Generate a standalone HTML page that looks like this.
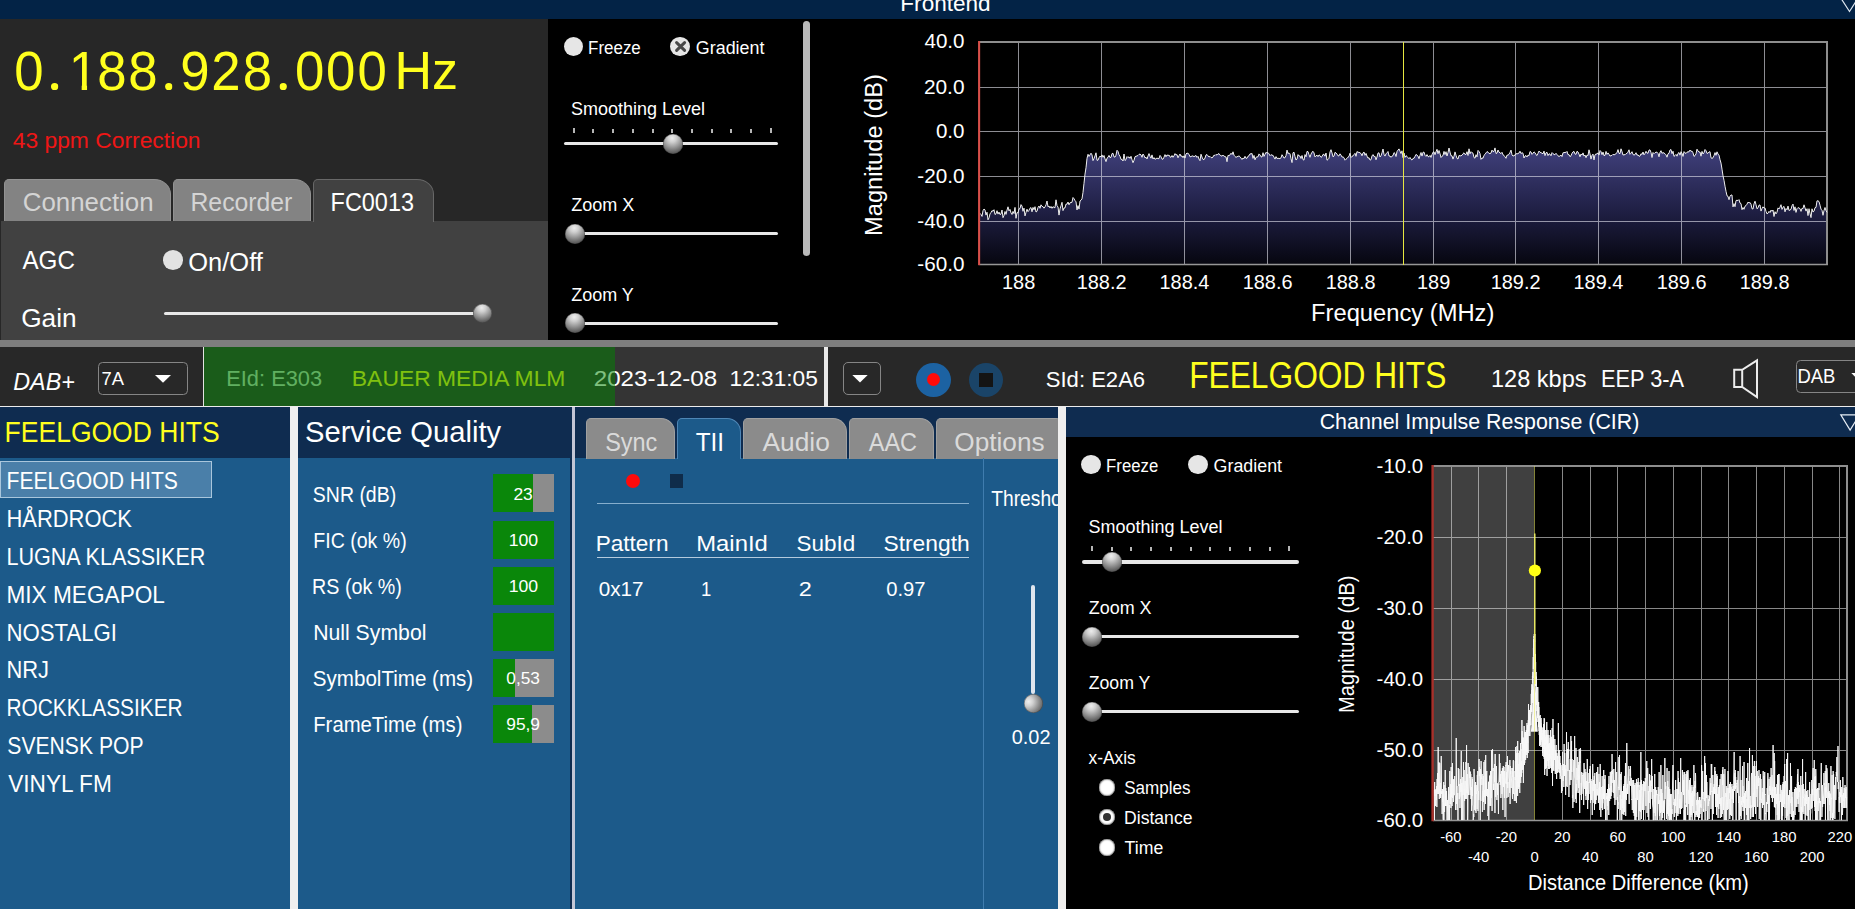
<!DOCTYPE html>
<html lang="en"><head><meta charset="utf-8"><title>DAB+ receiver</title>
<style>
html,body{margin:0;padding:0;background:#000}
body{width:1855px;height:909px;position:relative;overflow:hidden;font-family:"Liberation Sans",sans-serif}
#root{position:absolute;left:0;top:0;width:1855px;height:909px;overflow:hidden;background:#000}
#root div,#root svg,#root span.t{position:absolute}
#root svg{overflow:hidden}
.t{white-space:nowrap;line-height:1;transform-origin:0 0;display:block}
.c{border-radius:50%}
.thumb.v{background:radial-gradient(circle at 24% 40%,#efefef 0%,#d2d2d2 24%,#9a9a9a 52%,#6a6a6a 76%,#484848 100%)}
.thumb{border-radius:50%;background:radial-gradient(circle at 46% 20%,#ededed 0%,#cfcfcf 22%,#959595 50%,#606060 75%,#3a3a3a 100%);box-shadow:inset 0 0 0 0.6px rgba(50,50,50,.55)}
</style></head>
<body><div id="root">
<div style="left:0px;top:0px;width:1855px;height:19px;background:#032346;"></div>
<span class="t" style="left:900px;top:-8px;font-size:22.89px;color:#fff;transform:translateX(0.34px) scaleX(0.9863);">Frontend</span>
<svg style="left:1835px;top:0;width:20px;height:19px" viewBox="0 0 20 19"><path d="M4.5 -4 L14.5 11.5 L24.5 -4" fill="none" stroke="#dfe8f2" stroke-width="1.2"/></svg>
<div style="left:0px;top:19px;width:548px;height:202px;background:#272727;"></div>
<div style="left:0px;top:221px;width:548px;height:119px;background:#272727;"></div>
<div style="left:1px;top:221px;width:547px;height:119px;background:#414141;"></div>
<div style="left:0;top:0;width:0;height:0"><span class="t" style="left:14px;top:43px;font-size:55.8px;color:#ffff1e;transform:translateX(0.32px) scaleX(0.945)">0</span><span class="t" style="left:43.97px;top:25px;font-size:77.0px;color:#ffff1e;clip-path:circle(3.7px at 10.68px 61.60px)">.</span><span class="t" style="left:68px;top:43px;font-size:55.8px;color:#ffff1e;transform:translateX(0.82px) scaleX(0.945);clip-path:polygon(0.00px 0.00px,19.31px 0.00px,19.31px 48.00px,13.62px 48.00px,13.62px 41.20px,0.00px 41.20px)">1</span><span class="t" style="left:97px;top:43px;font-size:55.8px;color:#ffff1e;transform:translateX(0.16px) scaleX(0.945)">8</span><span class="t" style="left:128px;top:43px;font-size:55.8px;color:#ffff1e;transform:translateX(0.36px) scaleX(0.945)">8</span><span class="t" style="left:158.12px;top:25px;font-size:77.0px;color:#ffff1e;clip-path:circle(3.7px at 10.68px 61.60px)">.</span><span class="t" style="left:180px;top:43px;font-size:55.8px;color:#ffff1e;transform:translateX(0.33px) scaleX(0.945)">9</span><span class="t" style="left:211px;top:43px;font-size:55.8px;color:#ffff1e;transform:translateX(0.36px) scaleX(0.945)">2</span><span class="t" style="left:242px;top:43px;font-size:55.8px;color:#ffff1e;transform:translateX(0.66px) scaleX(0.945)">8</span><span class="t" style="left:272.57px;top:25px;font-size:77.0px;color:#ffff1e;clip-path:circle(3.7px at 10.68px 61.60px)">.</span><span class="t" style="left:295px;top:43px;font-size:55.8px;color:#ffff1e;transform:translateX(0.02px) scaleX(0.945)">0</span><span class="t" style="left:326px;top:43px;font-size:55.8px;color:#ffff1e;transform:translateX(0.02px) scaleX(0.945)">0</span><span class="t" style="left:357px;top:43px;font-size:55.8px;color:#ffff1e;transform:translateX(0.42px) scaleX(0.945)">0</span></div>
<span class="t" style="left:394px;top:44px;font-size:53.78px;color:#ffff1e;transform:translateX(0.51px) scaleX(0.9673);">Hz</span>
<span class="t" style="left:12px;top:130px;font-size:22.38px;color:#ee1616;transform:translateX(0.69px) scaleX(1.0208);">43 ppm Correction</span>
<div style="left:4px;top:178.7px;width:167.4px;height:42.30000000000001px;background:#838383;border-radius:5px 17px 0 0 / 5px 15px 0 0;box-sizing:border-box;border:1px solid #929292;border-bottom:none;"></div>
<div style="left:172.9px;top:178.7px;width:138.1px;height:42.30000000000001px;background:#838383;border-radius:5px 17px 0 0 / 5px 15px 0 0;box-sizing:border-box;border:1px solid #929292;border-bottom:none;"></div>
<div style="left:312.5px;top:178.7px;width:121.5px;height:43.30000000000001px;background:#414141;border-radius:5px 17px 0 0 / 5px 15px 0 0;box-sizing:border-box;border:1px solid #686868;border-bottom:none;"></div>
<span class="t" style="left:22px;top:189px;font-size:26.16px;color:#d4d4d4;transform:translateX(0.71px) scaleX(0.9894);">Connection</span>
<span class="t" style="left:190px;top:189px;font-size:26.16px;color:#d4d4d4;transform:translateX(0.46px) scaleX(0.9472);">Recorder</span>
<span class="t" style="left:330px;top:189px;font-size:26.16px;color:#fff;transform:translateX(0.57px) scaleX(0.8964);">FC0013</span>
<span class="t" style="left:22px;top:247px;font-size:26.45px;color:#fff;transform:translateX(0.44px) scaleX(0.9151);">AGC</span>
<div class="c" style="left:163px;top:250px;width:20px;height:19.5px;background:#e2e2e2"></div>
<span class="t" style="left:188px;top:250px;font-size:25.87px;color:#fff;transform:translateX(0.29px) scaleX(0.9856);">On/Off</span>
<span class="t" style="left:21px;top:305px;font-size:26.45px;color:#fff;transform:translateX(0.19px) scaleX(0.9935);">Gain</span>
<div style="left:163.75px;top:312.1px;width:316.25px;height:3.3px;background:#e8e8e8;border-radius:2px"></div>
<div class="thumb" style="left:473.0px;top:304.25px;width:19px;height:19px"></div>
<div class="c" style="left:564.25px;top:36.5px;width:19px;height:19px;background:#e6e6e6"></div>
<span class="t" style="left:588px;top:39px;font-size:18.90px;color:#fff;transform:translateX(0.10px) scaleX(0.8953);">Freeze</span>
<div class="c" style="left:670.2px;top:36.5px;width:19.8px;height:19.3px;background:#e6e6e6"></div>
<svg style="left:670.5px;top:36.5px;width:19.5px;height:19px" viewBox="0 0 19.5 19"><path d="M5.6 5.6 L13.6 13.4 M13.6 5.6 L5.6 13.4" stroke="#484848" stroke-width="3" stroke-linecap="round" fill="none"/></svg>
<span class="t" style="left:695px;top:39px;font-size:18.90px;color:#fff;transform:translateX(0.86px) scaleX(0.9457);">Gradient</span>
<span class="t" style="left:570px;top:100px;font-size:18.90px;color:#fff;transform:translateX(0.94px) scaleX(0.9521);">Smoothing Level</span>
<div style="left:573px;top:127.50px;width:2px;height:5.5px;background:#b6b6b6"></div>
<div style="left:592px;top:128.80px;width:2px;height:4.2px;background:#b6b6b6"></div>
<div style="left:612px;top:128.80px;width:2px;height:4.2px;background:#b6b6b6"></div>
<div style="left:632px;top:128.80px;width:2px;height:4.2px;background:#b6b6b6"></div>
<div style="left:652px;top:128.80px;width:2px;height:4.2px;background:#b6b6b6"></div>
<div style="left:671px;top:128.80px;width:2px;height:4.2px;background:#b6b6b6"></div>
<div style="left:691px;top:128.80px;width:2px;height:4.2px;background:#b6b6b6"></div>
<div style="left:711px;top:128.80px;width:2px;height:4.2px;background:#b6b6b6"></div>
<div style="left:730px;top:128.80px;width:2px;height:4.2px;background:#b6b6b6"></div>
<div style="left:750px;top:128.80px;width:2px;height:4.2px;background:#b6b6b6"></div>
<div style="left:770px;top:127.50px;width:2px;height:5.5px;background:#b6b6b6"></div>
<div style="left:564.25px;top:142.1px;width:213.25px;height:3.3px;background:#e8e8e8;border-radius:2px"></div>
<div class="thumb" style="left:662.75px;top:133.75px;width:20px;height:20px"></div>
<span class="t" style="left:571px;top:196px;font-size:18.53px;color:#fff;transform:translateX(0.21px) scaleX(0.9736);">Zoom X</span>
<div style="left:567.25px;top:231.85px;width:210.75px;height:3.3px;background:#e8e8e8;border-radius:2px"></div>
<div class="thumb" style="left:564.75px;top:223.5px;width:20px;height:20px"></div>
<span class="t" style="left:571px;top:286px;font-size:18.53px;color:#fff;transform:translateX(0.21px) scaleX(0.9715);">Zoom Y</span>
<div style="left:567.25px;top:321.6px;width:210.75px;height:3.3px;background:#e8e8e8;border-radius:2px"></div>
<div class="thumb" style="left:564.75px;top:313.25px;width:20px;height:20px"></div>
<div style="left:802.5px;top:21px;width:7px;height:235px;background:#b9b9b9;border-radius:3.5px;"></div>
<div style="left:0px;top:340px;width:1855px;height:7px;background:#7e7e7e;"></div>
<div style="left:0px;top:347px;width:1855px;height:59px;background:#282828;"></div>
<div style="left:203px;top:347px;width:621px;height:59px;background:#343434;"></div>
<div style="left:824px;top:347px;width:4px;height:59px;background:#e9e9e9;"></div>
<div style="left:0px;top:405.9px;width:1855px;height:1.3px;background:#ececec;"></div>
<span class="t" style="left:13px;top:370px;font-size:24.71px;color:#fff;transform:translateX(0.30px) scaleX(0.9430);font-style:italic;">DAB+</span>
<div style="left:98px;top:361.9px;width:90px;height:32.8px;border:1.3px solid #858585;border-radius:4.5px;box-sizing:border-box;background:#282828"></div>
<span class="t" style="left:101px;top:369px;font-size:19.19px;color:#fff;transform:translateX(0.58px) scaleX(0.9578);">7A</span>
<svg style="left:155px;top:374px;width:17px;height:10px" viewBox="0 0 17 10"><path d="M0 1 L16 1 L8 8.8 Z" fill="#fff"/></svg>
<span class="t" style="left:226px;top:367px;font-size:22.67px;color:#c0dcc0;transform:translateX(0.20px) scaleX(0.9643);">EId: E303</span>
<span class="t" style="left:351px;top:367px;font-size:22.67px;color:#ffff1e;transform:translateX(0.86px) scaleX(1.0097);">BAUER MEDIA MLM</span>
<span class="t" style="left:593px;top:367px;font-size:22.67px;color:#fff;transform:translateX(0.79px) scaleX(1.0647);">2023-12-08</span>
<span class="t" style="left:729px;top:367px;font-size:22.67px;color:#fff;transform:translateX(0.55px) scaleX(1.0011);">12:31:05</span>
<div style="left:203px;top:347px;width:411.8px;height:59px;background:rgba(0,132,0,0.5);border-left:1.1px solid #e2e2e2;box-sizing:border-box;"></div>
<div style="left:843px;top:362px;width:37.8px;height:33px;border:1.3px solid #858585;border-radius:5px;box-sizing:border-box;background:#282828"></div>
<svg style="left:852.2px;top:373.5px;width:17px;height:10px" viewBox="0 0 17 10"><path d="M0.3 1 L15.7 1 L8 8.6 Z" fill="#fff"/></svg>
<div class="c" style="left:916.25px;top:363px;width:34.5px;height:34px;background:#1c62a2"></div>
<div class="c" style="left:926.8px;top:372.9px;width:13.6px;height:13.6px;background:#ff0a0a"></div>
<div class="c" style="left:969.25px;top:363px;width:34px;height:34px;background:#1a4468"></div>
<div style="left:979.25px;top:372.5px;width:14px;height:14.25px;background:#141414;"></div>
<span class="t" style="left:1045px;top:368px;font-size:22.67px;color:#fff;transform:translateX(0.76px) scaleX(0.9740);">SId: E2A6</span>
<span class="t" style="left:1189px;top:357px;font-size:37.21px;color:#ffff1e;transform:translateX(0.18px) scaleX(0.8522);">FEELGOOD HITS</span>
<span class="t" style="left:1490px;top:368px;font-size:23.26px;color:#fff;transform:translateX(0.98px) scaleX(1.0130);">128 kbps</span>
<span class="t" style="left:1600px;top:368px;font-size:23.26px;color:#fff;transform:translateX(0.95px) scaleX(0.9360);">EEP 3-A</span>
<svg style="left:1730px;top:356px;width:32px;height:46px" viewBox="0 0 32 46"><path d="M4.2 13.8 L12.2 13.8 L27.0 4.4 L27.0 41.0 L12.2 31 L4.2 31 Z M12.2 13.8 L12.2 31" fill="none" stroke="#ececec" stroke-width="2" stroke-linejoin="miter"/></svg>
<div style="left:1796px;top:360px;width:80px;height:33.2px;border:1.3px solid #858585;border-radius:4.5px;box-sizing:border-box;background:#282828"></div>
<span class="t" style="left:1797px;top:367px;font-size:19.62px;color:#fff;transform:translateX(0.48px) scaleX(0.9411);">DAB</span>
<svg style="left:1851px;top:372px;width:17px;height:10px" viewBox="0 0 17 10"><path d="M0.3 1 L15.7 1 L8 8.6 Z" fill="#fff"/></svg>
<div style="left:0px;top:407px;width:290px;height:51px;background:#0f2c50;"></div>
<div style="left:0px;top:458px;width:290px;height:451px;background:#1c5a8a;"></div>
<span class="t" style="left:4px;top:418px;font-size:28.92px;color:#ffff1e;transform:translateX(0.56px) scaleX(0.9173);">FEELGOOD HITS</span>
<div style="left:0;top:460.5px;width:212px;height:37.5px;background:#4a7fa9;border:1.5px solid #a9c6dc;box-sizing:border-box"></div>
<span class="t" style="left:6px;top:470px;font-size:23.40px;color:#fff;transform:translateX(0.51px) scaleX(0.9031);">FEELGOOD HITS</span>
<span class="t" style="left:6px;top:508px;font-size:23.40px;color:#fff;transform:translateX(0.44px) scaleX(0.9378);">HÅRDROCK</span>
<span class="t" style="left:6px;top:546px;font-size:23.40px;color:#fff;transform:translateX(0.47px) scaleX(0.9218);">LUGNA KLASSIKER</span>
<span class="t" style="left:6px;top:584px;font-size:23.40px;color:#fff;transform:translateX(0.38px) scaleX(0.9682);">MIX MEGAPOL</span>
<span class="t" style="left:6px;top:622px;font-size:23.40px;color:#fff;transform:translateX(0.42px) scaleX(0.9489);">NOSTALGI</span>
<span class="t" style="left:6px;top:659px;font-size:23.40px;color:#fff;transform:translateX(0.44px) scaleX(0.9370);">NRJ</span>
<span class="t" style="left:6px;top:697px;font-size:23.40px;color:#fff;transform:translateX(0.53px) scaleX(0.8914);">ROCKKLASSIKER</span>
<span class="t" style="left:7px;top:735px;font-size:23.40px;color:#fff;transform:translateX(0.30px) scaleX(0.9034);">SVENSK POP</span>
<span class="t" style="left:8px;top:773px;font-size:23.40px;color:#fff;transform:translateX(0.14px) scaleX(0.9684);">VINYL FM</span>
<div style="left:290px;top:407px;width:8px;height:502px;background:#efefef;"></div>
<div style="left:298px;top:407px;width:272px;height:51px;background:#0f2c50;"></div>
<div style="left:298px;top:458px;width:272px;height:451px;background:#1c5a8a;"></div>
<span class="t" style="left:304px;top:418px;font-size:28.92px;color:#fff;transform:translateX(0.94px) scaleX(1.0096);">Service Quality</span>
<span class="t" style="left:312px;top:484px;font-size:21.80px;color:#fff;transform:translateX(0.87px) scaleX(0.8931);">SNR (dB)</span>
<div style="left:493.25px;top:474.25px;width:60.25px;height:37.75px;background:#8c8c8c;"></div>
<div style="left:493.25px;top:474.25px;width:39.25px;height:37.75px;background:#0a870a;"></div>
<span class="t" style="left:513px;top:486px;font-size:17.30px;color:#fff;transform:translateX(0.38px) scaleX(1.0086);">23</span>
<span class="t" style="left:313px;top:530px;font-size:21.80px;color:#fff;transform:translateX(0.29px) scaleX(0.8966);">FIC (ok %)</span>
<div style="left:493.25px;top:520.75px;width:60.25px;height:37.75px;background:#8c8c8c;"></div>
<div style="left:493.25px;top:520.75px;width:60.25px;height:37.75px;background:#0a870a;"></div>
<span class="t" style="left:508px;top:532px;font-size:17.30px;color:#fff;transform:translateX(0.67px) scaleX(1.0225);">100</span>
<span class="t" style="left:312px;top:576px;font-size:21.80px;color:#fff;transform:translateX(0.12px) scaleX(0.9043);">RS (ok %)</span>
<div style="left:493.25px;top:567px;width:60.25px;height:37.75px;background:#8c8c8c;"></div>
<div style="left:493.25px;top:567px;width:60.25px;height:37.75px;background:#0a870a;"></div>
<span class="t" style="left:508px;top:578px;font-size:17.30px;color:#fff;transform:translateX(0.67px) scaleX(1.0225);">100</span>
<span class="t" style="left:313px;top:622px;font-size:21.80px;color:#fff;transform:translateX(0.15px) scaleX(0.9739);">Null Symbol</span>
<div style="left:493.25px;top:613px;width:60.25px;height:37.75px;background:#8c8c8c;"></div>
<div style="left:493.25px;top:613px;width:60.25px;height:37.75px;background:#0a870a;"></div>
<span class="t" style="left:312px;top:668px;font-size:21.80px;color:#fff;transform:translateX(0.82px) scaleX(0.9439);">SymbolTime (ms)</span>
<div style="left:493.25px;top:659px;width:60.25px;height:37.75px;background:#8c8c8c;"></div>
<div style="left:493.25px;top:659px;width:21.25px;height:37.75px;background:#0a870a;"></div>
<span class="t" style="left:506px;top:670px;font-size:17.30px;color:#fff;transform:translateX(0.35px) scaleX(0.9998);">0,53</span>
<span class="t" style="left:313px;top:714px;font-size:21.80px;color:#fff;transform:translateX(0.22px) scaleX(0.9313);">FrameTime (ms)</span>
<div style="left:493.25px;top:705px;width:60.25px;height:37.75px;background:#8c8c8c;"></div>
<div style="left:493.25px;top:705px;width:38.25px;height:37.75px;background:#0a870a;"></div>
<span class="t" style="left:506px;top:716px;font-size:17.30px;color:#fff;transform:translateX(0.22px) scaleX(1.0051);">95,9</span>
<div style="left:570px;top:407px;width:1.5px;height:502px;background:#0f2c50;"></div>
<div style="left:571.5px;top:407px;width:3.5px;height:502px;background:#c3c6d6;"></div>
<div style="left:575px;top:407px;width:483px;height:51px;background:#0f2c50;"></div>
<div style="left:575px;top:458px;width:483px;height:451px;background:#1c5a8a;"></div>
<div style="left:575px;top:407px;width:483px;height:502px;overflow:hidden;background:none"><div style="position:absolute;left:-575px;top:-407px">
<div style="left:586.25px;top:418px;width:88.75px;height:40.5px;background:#8b8b8b;border-radius:5px 14px 0 0;box-sizing:border-box;border:1px solid #a0a0a0;border-bottom:none"></div>
<span class="t" style="left:605px;top:429px;font-size:26.16px;color:#dadada;transform:translateX(0.19px) scaleX(0.8967);">Sync</span>
<div style="left:677px;top:418px;width:64.25px;height:41px;background:#1c5a8a;border-radius:5px 14px 0 0;box-sizing:border-box;border:1px solid #4e86b6;border-bottom:none"></div>
<span class="t" style="left:695px;top:429px;font-size:26.16px;color:#fff;transform:translateX(0.70px) scaleX(0.9283);">TII</span>
<div style="left:742.5px;top:418px;width:104.5px;height:40.5px;background:#8b8b8b;border-radius:5px 14px 0 0;box-sizing:border-box;border:1px solid #a0a0a0;border-bottom:none"></div>
<span class="t" style="left:762px;top:429px;font-size:26.16px;color:#dadada;transform:translateX(0.43px) scaleX(1.0068);">Audio</span>
<div style="left:848.75px;top:418px;width:85.0px;height:40.5px;background:#8b8b8b;border-radius:5px 14px 0 0;box-sizing:border-box;border:1px solid #a0a0a0;border-bottom:none"></div>
<span class="t" style="left:868px;top:429px;font-size:26.16px;color:#dadada;transform:translateX(0.69px) scaleX(0.8999);">AAC</span>
<div style="left:935.5px;top:418px;width:134.5px;height:40.5px;background:#8b8b8b;border-radius:5px 14px 0 0;box-sizing:border-box;border:1px solid #a0a0a0;border-bottom:none"></div>
<span class="t" style="left:954px;top:429px;font-size:26.16px;color:#dadada;transform:translateX(0.25px) scaleX(1.0024);">Options</span>
<span class="t" style="left:991px;top:488px;font-size:21.80px;color:#fff;transform:translateX(0.32px) scaleX(0.8810);">Threshold</span>
</div></div>
<div class="c" style="left:626.25px;top:474px;width:14px;height:14px;background:#ff0a0a"></div>
<div style="left:670px;top:474px;width:13.25px;height:13.8px;background:#0f2c4a;"></div>
<div style="left:597px;top:503px;width:371.5px;height:1px;background:#86aecd;"></div>
<span class="t" style="left:595px;top:533px;font-size:21.80px;color:#fff;transform:translateX(0.64px) scaleX(1.0358);">Pattern</span>
<span class="t" style="left:696px;top:533px;font-size:21.80px;color:#fff;transform:translateX(0.29px) scaleX(1.0924);">MainId</span>
<span class="t" style="left:796px;top:533px;font-size:21.80px;color:#fff;transform:translateX(0.49px) scaleX(1.0299);">SubId</span>
<span class="t" style="left:883px;top:533px;font-size:21.80px;color:#fff;transform:translateX(0.47px) scaleX(1.0460);">Strength</span>
<div style="left:597px;top:557px;width:371.5px;height:1.2px;background:#b4cadd;"></div>
<span class="t" style="left:598px;top:578px;font-size:21.08px;color:#fff;transform:translateX(0.73px) scaleX(0.9797);">0x17</span>
<span class="t" style="left:701px;top:578px;font-size:21.08px;color:#fff;transform:translateX(0.11px) scaleX(0.8777);">1</span>
<span class="t" style="left:798px;top:578px;font-size:21.08px;color:#fff;transform:translateX(0.83px) scaleX(1.1149);">2</span>
<span class="t" style="left:886px;top:578px;font-size:21.08px;color:#fff;transform:translateX(0.24px) scaleX(0.9566);">0.97</span>
<div style="left:983.25px;top:458px;width:1px;height:451px;background:#3f7cae;"></div>
<div style="left:1031.25px;top:585px;width:3.75px;height:109px;background:#dfe6ef;border-radius:2px;"></div>
<div class="thumb v" style="left:1023.75px;top:694.25px;width:19.25px;height:19px"></div>
<span class="t" style="left:1011px;top:727px;font-size:20.35px;color:#fff;transform:translateX(0.75px) scaleX(0.9776);">0.02</span>
<div style="left:1058px;top:407px;width:8px;height:502px;background:#f0efee;"></div>
<div style="left:1066px;top:407px;width:789px;height:29.8px;background:#0f2c50;"></div>
<span class="t" style="left:1319px;top:410px;font-size:22.89px;color:#fff;transform:translateX(0.68px) scaleX(0.9346);">Channel Impulse Response (CIR)</span>
<svg style="left:1835px;top:410px;width:20px;height:24px" viewBox="0 0 20 24"><path d="M5.8 4.8 L24.5 4.8 L15.1 20 Z" fill="none" stroke="#e8eef5" stroke-width="1.2"/></svg>
<div class="c" style="left:1081.25px;top:454.8px;width:19.5px;height:19px;background:#e6e6e6"></div>
<span class="t" style="left:1106px;top:457px;font-size:18.53px;color:#fff;transform:translateX(0.12px) scaleX(0.9039);">Freeze</span>
<div class="c" style="left:1188px;top:454.8px;width:19.5px;height:19px;background:#e6e6e6"></div>
<span class="t" style="left:1213px;top:457px;font-size:18.53px;color:#fff;transform:translateX(0.61px) scaleX(0.9642);">Gradient</span>
<span class="t" style="left:1088px;top:518px;font-size:18.90px;color:#fff;transform:translateX(0.44px) scaleX(0.9521);">Smoothing Level</span>
<div style="left:1091px;top:545.75px;width:2px;height:5.5px;background:#b6b6b6"></div>
<div style="left:1111px;top:547.05px;width:2px;height:4.2px;background:#b6b6b6"></div>
<div style="left:1130px;top:547.05px;width:2px;height:4.2px;background:#b6b6b6"></div>
<div style="left:1150px;top:547.05px;width:2px;height:4.2px;background:#b6b6b6"></div>
<div style="left:1170px;top:547.05px;width:2px;height:4.2px;background:#b6b6b6"></div>
<div style="left:1190px;top:547.05px;width:2px;height:4.2px;background:#b6b6b6"></div>
<div style="left:1209px;top:547.05px;width:2px;height:4.2px;background:#b6b6b6"></div>
<div style="left:1229px;top:547.05px;width:2px;height:4.2px;background:#b6b6b6"></div>
<div style="left:1249px;top:547.05px;width:2px;height:4.2px;background:#b6b6b6"></div>
<div style="left:1269px;top:547.05px;width:2px;height:4.2px;background:#b6b6b6"></div>
<div style="left:1288px;top:545.75px;width:2px;height:5.5px;background:#b6b6b6"></div>
<div style="left:1081.75px;top:560.35px;width:217.0px;height:3.3px;background:#e8e8e8;border-radius:2px"></div>
<div class="thumb" style="left:1101.8px;top:552.0px;width:20px;height:20px"></div>
<span class="t" style="left:1088px;top:599px;font-size:18.53px;color:#fff;transform:translateX(0.71px) scaleX(0.9697);">Zoom X</span>
<div style="left:1084.75px;top:635.1px;width:214.0px;height:3.3px;background:#e8e8e8;border-radius:2px"></div>
<div class="thumb" style="left:1081.75px;top:626.75px;width:20px;height:20px"></div>
<span class="t" style="left:1088px;top:674px;font-size:18.53px;color:#fff;transform:translateX(0.72px) scaleX(0.9557);">Zoom Y</span>
<div style="left:1084.75px;top:710.1px;width:214.0px;height:3.3px;background:#e8e8e8;border-radius:2px"></div>
<div class="thumb" style="left:1081.75px;top:701.75px;width:20px;height:20px"></div>
<span class="t" style="left:1088px;top:749px;font-size:18.53px;color:#fff;transform:translateX(0.53px) scaleX(0.9380);">x-Axis</span>
<div class="c" style="left:1098.6px;top:779.1px;width:16.8px;height:16.8px;background:#fff;box-shadow:inset 0 0 1.5px 0.5px #555"></div>
<div class="c" style="left:1098.6px;top:808.6px;width:16.8px;height:16.8px;background:#fff;box-shadow:inset 0 0 1.5px 0.5px #555"></div>
<div class="c" style="left:1102.9px;top:812.9px;width:8.2px;height:8.2px;background:#333"></div>
<div class="c" style="left:1098.6px;top:839.1px;width:16.8px;height:16.8px;background:#fff;box-shadow:inset 0 0 1.5px 0.5px #555"></div>
<span class="t" style="left:1124px;top:779px;font-size:18.53px;color:#fff;transform:translateX(0.23px) scaleX(0.9206);">Samples</span>
<span class="t" style="left:1124px;top:809px;font-size:18.53px;color:#fff;transform:translateX(0.05px) scaleX(0.9495);">Distance</span>
<span class="t" style="left:1124px;top:839px;font-size:18.53px;color:#fff;transform:translateX(0.60px) scaleX(0.9545);">Time</span>
<svg style="left:0;top:0;width:1855px;height:340px" viewBox="0 0 1855 340"><defs><linearGradient id="sg" gradientUnits="userSpaceOnUse" x1="0" y1="150" x2="0" y2="265"><stop offset="0" stop-color="#3f3f7a"/><stop offset="0.55" stop-color="#1e1e42"/><stop offset="1" stop-color="#06060f"/></linearGradient></defs><polygon points="979.5,264.75 980.0,213.3 981.0,214.5 982.0,216.4 983.0,210.7 984.0,209.0 985.0,209.9 986.0,215.1 987.0,212.2 988.0,219.8 989.0,217.9 990.0,213.9 991.0,212.5 992.0,210.6 993.0,211.3 994.0,209.7 995.0,214.5 996.0,213.8 997.0,210.7 998.0,214.1 999.0,212.1 1000.0,214.6 1001.0,214.0 1002.0,210.0 1003.0,217.7 1004.0,215.5 1005.0,211.5 1006.0,214.4 1007.0,210.1 1008.0,206.8 1009.0,210.9 1010.0,209.4 1011.0,212.9 1012.0,214.5 1013.0,211.4 1014.0,213.6 1015.0,207.4 1016.0,218.3 1017.0,212.6 1018.0,212.9 1019.0,208.9 1020.0,208.6 1021.0,204.6 1022.0,206.0 1023.0,211.3 1024.0,208.1 1025.0,215.9 1026.0,212.4 1027.0,209.2 1028.0,211.7 1029.0,210.3 1030.0,208.2 1031.0,207.6 1032.0,211.8 1033.0,207.4 1034.0,209.8 1035.0,206.7 1036.0,212.0 1037.0,211.3 1038.0,207.5 1039.0,206.0 1040.0,208.3 1041.0,204.8 1042.0,206.4 1043.0,206.6 1044.0,208.2 1045.0,206.9 1046.0,204.8 1047.0,201.0 1048.0,206.8 1049.0,206.0 1050.0,208.0 1051.0,206.4 1052.0,208.3 1053.0,206.6 1054.0,207.5 1055.0,207.7 1056.0,199.8 1057.0,205.7 1058.0,207.0 1059.0,215.1 1060.0,208.9 1061.0,205.8 1062.0,202.3 1063.0,210.6 1064.0,208.0 1065.0,207.9 1066.0,204.1 1067.0,204.2 1068.0,202.0 1069.0,204.8 1070.0,202.8 1071.0,202.5 1072.0,202.3 1073.0,197.5 1074.0,198.7 1075.0,200.6 1076.0,201.8 1077.0,209.9 1078.0,205.6 1079.0,209.1 1080.0,201.0 1081.0,200.2 1082.0,198.9 1083.0,192.4 1084.0,183.3 1085.0,174.1 1086.0,167.8 1087.0,158.4 1088.0,154.3 1089.0,156.5 1090.0,154.9 1091.0,153.2 1092.0,154.9 1093.0,160.6 1094.0,158.5 1095.0,155.9 1096.0,152.8 1097.0,160.3 1098.0,160.2 1099.0,157.7 1100.0,156.1 1101.0,157.0 1102.0,154.9 1103.0,157.3 1104.0,155.5 1105.0,158.9 1106.0,161.6 1107.0,158.2 1108.0,157.3 1109.0,155.4 1110.0,157.6 1111.0,157.3 1112.0,153.6 1113.0,153.3 1114.0,156.9 1115.0,157.1 1116.0,155.2 1117.0,150.3 1118.0,151.4 1119.0,154.8 1120.0,156.3 1121.0,159.4 1122.0,159.4 1123.0,161.0 1124.0,154.0 1125.0,160.5 1126.0,159.6 1127.0,156.6 1128.0,157.6 1129.0,156.8 1130.0,158.4 1131.0,156.3 1132.0,159.8 1133.0,162.7 1134.0,160.3 1135.0,156.7 1136.0,156.2 1137.0,156.0 1138.0,155.4 1139.0,154.4 1140.0,154.1 1141.0,154.9 1142.0,157.3 1143.0,154.0 1144.0,155.5 1145.0,157.9 1146.0,157.2 1147.0,159.0 1148.0,156.0 1149.0,153.6 1150.0,156.3 1151.0,158.2 1152.0,154.9 1153.0,159.0 1154.0,157.6 1155.0,159.3 1156.0,158.7 1157.0,158.0 1158.0,158.6 1159.0,158.6 1160.0,155.4 1161.0,156.7 1162.0,159.2 1163.0,159.2 1164.0,157.2 1165.0,154.6 1166.0,156.8 1167.0,154.9 1168.0,155.6 1169.0,155.0 1170.0,156.9 1171.0,157.3 1172.0,155.5 1173.0,157.3 1174.0,155.9 1175.0,153.6 1176.0,155.0 1177.0,154.6 1178.0,157.8 1179.0,155.8 1180.0,154.0 1181.0,156.4 1182.0,155.8 1183.0,157.7 1184.0,155.8 1185.0,158.1 1186.0,153.9 1187.0,153.1 1188.0,153.4 1189.0,154.3 1190.0,156.8 1191.0,156.6 1192.0,156.0 1193.0,155.9 1194.0,156.8 1195.0,156.0 1196.0,155.5 1197.0,157.4 1198.0,156.3 1199.0,159.1 1200.0,160.7 1201.0,154.2 1202.0,157.1 1203.0,159.4 1204.0,159.7 1205.0,158.0 1206.0,154.9 1207.0,154.6 1208.0,155.8 1209.0,157.0 1210.0,156.4 1211.0,157.5 1212.0,157.8 1213.0,157.0 1214.0,155.1 1215.0,155.5 1216.0,154.4 1217.0,155.1 1218.0,154.1 1219.0,153.6 1220.0,155.1 1221.0,156.1 1222.0,155.8 1223.0,155.4 1224.0,155.9 1225.0,156.8 1226.0,156.9 1227.0,161.7 1228.0,155.4 1229.0,155.7 1230.0,154.9 1231.0,153.2 1232.0,154.5 1233.0,151.8 1234.0,155.2 1235.0,156.5 1236.0,157.4 1237.0,156.7 1238.0,156.4 1239.0,155.9 1240.0,156.7 1241.0,158.1 1242.0,159.5 1243.0,158.0 1244.0,158.7 1245.0,156.3 1246.0,158.3 1247.0,158.2 1248.0,156.2 1249.0,155.8 1250.0,153.8 1251.0,154.0 1252.0,153.4 1253.0,158.4 1254.0,155.4 1255.0,159.8 1256.0,157.3 1257.0,156.9 1258.0,156.8 1259.0,153.9 1260.0,154.9 1261.0,156.8 1262.0,157.0 1263.0,152.7 1264.0,156.4 1265.0,154.3 1266.0,152.3 1267.0,153.1 1268.0,152.6 1269.0,153.9 1270.0,155.7 1271.0,154.6 1272.0,155.3 1273.0,155.3 1274.0,157.2 1275.0,159.1 1276.0,156.6 1277.0,158.6 1278.0,158.1 1279.0,158.6 1280.0,158.5 1281.0,157.9 1282.0,154.7 1283.0,156.2 1284.0,158.0 1285.0,157.7 1286.0,155.5 1287.0,150.1 1288.0,153.7 1289.0,152.8 1290.0,153.9 1291.0,158.7 1292.0,162.6 1293.0,152.8 1294.0,152.2 1295.0,156.6 1296.0,160.0 1297.0,159.1 1298.0,154.6 1299.0,156.0 1300.0,156.0 1301.0,158.5 1302.0,155.5 1303.0,159.6 1304.0,160.1 1305.0,154.6 1306.0,156.8 1307.0,151.4 1308.0,151.6 1309.0,154.7 1310.0,157.3 1311.0,154.2 1312.0,152.2 1313.0,151.3 1314.0,152.9 1315.0,156.9 1316.0,155.9 1317.0,155.1 1318.0,156.7 1319.0,154.9 1320.0,155.6 1321.0,157.3 1322.0,156.6 1323.0,154.4 1324.0,154.3 1325.0,156.2 1326.0,153.0 1327.0,160.2 1328.0,159.5 1329.0,158.2 1330.0,152.0 1331.0,149.7 1332.0,152.9 1333.0,156.8 1334.0,156.1 1335.0,152.3 1336.0,153.0 1337.0,154.1 1338.0,155.8 1339.0,155.9 1340.0,153.8 1341.0,155.1 1342.0,157.1 1343.0,156.9 1344.0,157.7 1345.0,160.2 1346.0,159.2 1347.0,158.4 1348.0,157.1 1349.0,156.4 1350.0,153.2 1351.0,157.5 1352.0,156.4 1353.0,155.9 1354.0,154.5 1355.0,153.3 1356.0,156.3 1357.0,151.5 1358.0,152.4 1359.0,152.2 1360.0,152.9 1361.0,153.5 1362.0,155.8 1363.0,152.9 1364.0,152.0 1365.0,155.3 1366.0,153.4 1367.0,156.1 1368.0,158.2 1369.0,157.7 1370.0,160.1 1371.0,159.7 1372.0,155.9 1373.0,154.6 1374.0,156.5 1375.0,156.3 1376.0,159.8 1377.0,157.0 1378.0,153.1 1379.0,152.8 1380.0,157.0 1381.0,155.8 1382.0,152.8 1383.0,149.0 1384.0,154.4 1385.0,156.1 1386.0,153.8 1387.0,152.8 1388.0,151.5 1389.0,156.0 1390.0,156.0 1391.0,157.3 1392.0,156.1 1393.0,155.6 1394.0,152.6 1395.0,153.5 1396.0,156.5 1397.0,151.5 1398.0,150.1 1399.0,148.9 1400.0,151.2 1401.0,153.5 1402.0,150.8 1403.0,157.6 1404.0,153.0 1405.0,157.4 1406.0,155.7 1407.0,156.4 1408.0,157.7 1409.0,158.8 1410.0,157.4 1411.0,159.2 1412.0,160.1 1413.0,158.4 1414.0,158.3 1415.0,156.3 1416.0,154.4 1417.0,155.2 1418.0,156.1 1419.0,158.7 1420.0,155.4 1421.0,152.5 1422.0,156.1 1423.0,152.3 1424.0,152.1 1425.0,155.3 1426.0,156.4 1427.0,154.6 1428.0,156.6 1429.0,156.8 1430.0,155.4 1431.0,157.4 1432.0,154.5 1433.0,152.2 1434.0,151.8 1435.0,154.7 1436.0,151.7 1437.0,149.3 1438.0,153.7 1439.0,150.5 1440.0,153.6 1441.0,157.5 1442.0,156.2 1443.0,155.5 1444.0,151.4 1445.0,154.6 1446.0,151.7 1447.0,156.0 1448.0,152.6 1449.0,148.0 1450.0,152.1 1451.0,155.8 1452.0,155.8 1453.0,159.1 1454.0,156.3 1455.0,151.9 1456.0,155.3 1457.0,158.4 1458.0,159.0 1459.0,155.4 1460.0,155.9 1461.0,155.8 1462.0,155.2 1463.0,153.7 1464.0,152.8 1465.0,154.5 1466.0,154.4 1467.0,151.7 1468.0,155.5 1469.0,148.8 1470.0,153.8 1471.0,151.7 1472.0,152.7 1473.0,153.2 1474.0,157.5 1475.0,158.2 1476.0,154.7 1477.0,156.9 1478.0,150.4 1479.0,151.5 1480.0,153.5 1481.0,159.4 1482.0,157.9 1483.0,158.3 1484.0,155.3 1485.0,154.4 1486.0,152.9 1487.0,151.6 1488.0,152.1 1489.0,153.5 1490.0,153.6 1491.0,153.1 1492.0,150.1 1493.0,151.7 1494.0,151.4 1495.0,147.9 1496.0,153.5 1497.0,153.1 1498.0,150.0 1499.0,152.1 1500.0,152.9 1501.0,153.6 1502.0,152.3 1503.0,154.9 1504.0,155.4 1505.0,156.9 1506.0,158.3 1507.0,155.1 1508.0,155.2 1509.0,154.3 1510.0,152.4 1511.0,150.1 1512.0,154.8 1513.0,156.1 1514.0,155.6 1515.0,155.1 1516.0,153.5 1517.0,154.1 1518.0,153.4 1519.0,153.1 1520.0,151.2 1521.0,153.6 1522.0,152.7 1523.0,153.2 1524.0,158.0 1525.0,156.0 1526.0,155.5 1527.0,157.0 1528.0,155.1 1529.0,155.7 1530.0,151.5 1531.0,152.0 1532.0,154.4 1533.0,153.2 1534.0,151.9 1535.0,152.7 1536.0,154.7 1537.0,155.5 1538.0,153.3 1539.0,151.0 1540.0,152.2 1541.0,152.7 1542.0,153.2 1543.0,153.8 1544.0,151.1 1545.0,155.6 1546.0,152.8 1547.0,152.3 1548.0,155.6 1549.0,153.8 1550.0,154.1 1551.0,155.8 1552.0,152.6 1553.0,153.6 1554.0,154.5 1555.0,154.7 1556.0,153.3 1557.0,154.6 1558.0,155.8 1559.0,156.5 1560.0,155.9 1561.0,155.0 1562.0,156.6 1563.0,152.7 1564.0,152.8 1565.0,152.2 1566.0,152.5 1567.0,151.4 1568.0,154.7 1569.0,154.6 1570.0,156.7 1571.0,155.8 1572.0,153.3 1573.0,151.9 1574.0,151.4 1575.0,154.0 1576.0,154.3 1577.0,151.3 1578.0,152.0 1579.0,154.1 1580.0,156.8 1581.0,154.0 1582.0,155.1 1583.0,152.9 1584.0,156.1 1585.0,155.0 1586.0,157.7 1587.0,155.1 1588.0,155.6 1589.0,149.8 1590.0,153.9 1591.0,159.1 1592.0,155.3 1593.0,154.1 1594.0,159.9 1595.0,154.7 1596.0,154.0 1597.0,154.0 1598.0,152.8 1599.0,155.1 1600.0,150.5 1601.0,151.6 1602.0,154.7 1603.0,152.1 1604.0,155.7 1605.0,155.3 1606.0,151.4 1607.0,154.4 1608.0,152.9 1609.0,154.3 1610.0,156.1 1611.0,155.6 1612.0,155.3 1613.0,154.3 1614.0,154.9 1615.0,154.4 1616.0,153.6 1617.0,152.7 1618.0,149.6 1619.0,153.4 1620.0,153.6 1621.0,148.8 1622.0,151.5 1623.0,155.1 1624.0,154.6 1625.0,154.8 1626.0,153.7 1627.0,153.4 1628.0,152.1 1629.0,149.8 1630.0,154.3 1631.0,153.2 1632.0,151.7 1633.0,154.5 1634.0,155.0 1635.0,154.6 1636.0,152.7 1637.0,155.2 1638.0,154.8 1639.0,156.3 1640.0,156.1 1641.0,153.7 1642.0,154.5 1643.0,152.0 1644.0,154.9 1645.0,153.4 1646.0,151.3 1647.0,153.0 1648.0,153.3 1649.0,150.1 1650.0,149.9 1651.0,152.4 1652.0,157.5 1653.0,152.5 1654.0,153.7 1655.0,152.7 1656.0,152.2 1657.0,152.2 1658.0,153.4 1659.0,156.8 1660.0,152.4 1661.0,150.7 1662.0,153.4 1663.0,152.5 1664.0,153.1 1665.0,153.7 1666.0,154.9 1667.0,157.2 1668.0,153.8 1669.0,153.3 1670.0,150.0 1671.0,149.5 1672.0,153.7 1673.0,151.2 1674.0,156.4 1675.0,155.5 1676.0,154.4 1677.0,156.2 1678.0,153.4 1679.0,152.5 1680.0,155.2 1681.0,151.7 1682.0,153.2 1683.0,156.4 1684.0,151.6 1685.0,152.9 1686.0,153.5 1687.0,152.2 1688.0,151.8 1689.0,151.9 1690.0,150.0 1691.0,151.4 1692.0,151.1 1693.0,152.8 1694.0,156.4 1695.0,155.6 1696.0,153.8 1697.0,149.2 1698.0,151.0 1699.0,152.1 1700.0,152.0 1701.0,156.2 1702.0,151.4 1703.0,154.0 1704.0,152.7 1705.0,149.5 1706.0,150.7 1707.0,153.4 1708.0,153.2 1709.0,152.0 1710.0,151.7 1711.0,157.8 1712.0,158.4 1713.0,157.8 1714.0,155.6 1715.0,152.6 1716.0,155.3 1717.0,151.8 1718.0,154.1 1719.0,155.2 1720.0,159.6 1721.0,163.1 1722.0,169.2 1723.0,175.8 1724.0,180.3 1725.0,186.2 1726.0,191.3 1727.0,195.8 1728.0,196.3 1729.0,199.7 1730.0,196.3 1731.0,195.0 1732.0,195.0 1733.0,206.9 1734.0,203.6 1735.0,206.7 1736.0,200.6 1737.0,200.2 1738.0,200.6 1739.0,199.6 1740.0,203.1 1741.0,203.6 1742.0,209.7 1743.0,207.5 1744.0,209.3 1745.0,206.2 1746.0,205.6 1747.0,204.2 1748.0,202.1 1749.0,203.0 1750.0,202.5 1751.0,204.2 1752.0,208.8 1753.0,209.0 1754.0,203.8 1755.0,201.2 1756.0,204.7 1757.0,208.8 1758.0,207.9 1759.0,205.1 1760.0,205.0 1761.0,211.1 1762.0,208.6 1763.0,206.8 1764.0,208.1 1765.0,207.9 1766.0,211.4 1767.0,213.9 1768.0,213.2 1769.0,211.3 1770.0,212.6 1771.0,210.1 1772.0,211.3 1773.0,210.0 1774.0,216.5 1775.0,211.7 1776.0,213.9 1777.0,212.2 1778.0,207.9 1779.0,209.0 1780.0,207.2 1781.0,204.7 1782.0,209.4 1783.0,207.2 1784.0,206.4 1785.0,211.8 1786.0,208.5 1787.0,209.8 1788.0,206.1 1789.0,210.5 1790.0,210.0 1791.0,209.3 1792.0,205.7 1793.0,204.1 1794.0,210.5 1795.0,206.8 1796.0,212.4 1797.0,208.6 1798.0,207.6 1799.0,208.1 1800.0,208.6 1801.0,211.4 1802.0,208.3 1803.0,208.6 1804.0,204.8 1805.0,207.9 1806.0,211.1 1807.0,208.7 1808.0,215.6 1809.0,208.7 1810.0,213.6 1811.0,217.6 1812.0,208.8 1813.0,212.0 1814.0,211.2 1815.0,207.7 1816.0,207.4 1817.0,200.9 1818.0,200.8 1819.0,201.6 1820.0,205.2 1821.0,209.2 1822.0,210.3 1823.0,215.3 1824.0,210.6 1825.0,207.5 1826.0,210.7 1827.0,212.3 1827.5,264.75" fill="url(#sg)"/><path d="M979.5 87.50H1827.5 M979.5 131.50H1827.5 M979.5 176.50H1827.5 M979.5 221.50H1827.5 M1018.50 42.0V264.75 M1101.50 42.0V264.75 M1184.50 42.0V264.75 M1267.50 42.0V264.75 M1350.50 42.0V264.75 M1433.50 42.0V264.75 M1515.50 42.0V264.75 M1598.50 42.0V264.75 M1681.50 42.0V264.75 M1764.50 42.0V264.75" stroke="rgba(228,228,238,0.62)" stroke-width="1" fill="none" shape-rendering="crispEdges"/><path d="M979.5 42H1828M1827 42V264.75" stroke="#8e8e8e" stroke-width="2" fill="none" shape-rendering="crispEdges"/><path d="M979.5 264.4H1828" stroke="#969696" stroke-width="1.5" fill="none"/><polyline points="980.0,213.3 981.0,214.5 982.0,216.4 983.0,210.7 984.0,209.0 985.0,209.9 986.0,215.1 987.0,212.2 988.0,219.8 989.0,217.9 990.0,213.9 991.0,212.5 992.0,210.6 993.0,211.3 994.0,209.7 995.0,214.5 996.0,213.8 997.0,210.7 998.0,214.1 999.0,212.1 1000.0,214.6 1001.0,214.0 1002.0,210.0 1003.0,217.7 1004.0,215.5 1005.0,211.5 1006.0,214.4 1007.0,210.1 1008.0,206.8 1009.0,210.9 1010.0,209.4 1011.0,212.9 1012.0,214.5 1013.0,211.4 1014.0,213.6 1015.0,207.4 1016.0,218.3 1017.0,212.6 1018.0,212.9 1019.0,208.9 1020.0,208.6 1021.0,204.6 1022.0,206.0 1023.0,211.3 1024.0,208.1 1025.0,215.9 1026.0,212.4 1027.0,209.2 1028.0,211.7 1029.0,210.3 1030.0,208.2 1031.0,207.6 1032.0,211.8 1033.0,207.4 1034.0,209.8 1035.0,206.7 1036.0,212.0 1037.0,211.3 1038.0,207.5 1039.0,206.0 1040.0,208.3 1041.0,204.8 1042.0,206.4 1043.0,206.6 1044.0,208.2 1045.0,206.9 1046.0,204.8 1047.0,201.0 1048.0,206.8 1049.0,206.0 1050.0,208.0 1051.0,206.4 1052.0,208.3 1053.0,206.6 1054.0,207.5 1055.0,207.7 1056.0,199.8 1057.0,205.7 1058.0,207.0 1059.0,215.1 1060.0,208.9 1061.0,205.8 1062.0,202.3 1063.0,210.6 1064.0,208.0 1065.0,207.9 1066.0,204.1 1067.0,204.2 1068.0,202.0 1069.0,204.8 1070.0,202.8 1071.0,202.5 1072.0,202.3 1073.0,197.5 1074.0,198.7 1075.0,200.6 1076.0,201.8 1077.0,209.9 1078.0,205.6 1079.0,209.1 1080.0,201.0 1081.0,200.2 1082.0,198.9 1083.0,192.4 1084.0,183.3 1085.0,174.1 1086.0,167.8 1087.0,158.4 1088.0,154.3 1089.0,156.5 1090.0,154.9 1091.0,153.2 1092.0,154.9 1093.0,160.6 1094.0,158.5 1095.0,155.9 1096.0,152.8 1097.0,160.3 1098.0,160.2 1099.0,157.7 1100.0,156.1 1101.0,157.0 1102.0,154.9 1103.0,157.3 1104.0,155.5 1105.0,158.9 1106.0,161.6 1107.0,158.2 1108.0,157.3 1109.0,155.4 1110.0,157.6 1111.0,157.3 1112.0,153.6 1113.0,153.3 1114.0,156.9 1115.0,157.1 1116.0,155.2 1117.0,150.3 1118.0,151.4 1119.0,154.8 1120.0,156.3 1121.0,159.4 1122.0,159.4 1123.0,161.0 1124.0,154.0 1125.0,160.5 1126.0,159.6 1127.0,156.6 1128.0,157.6 1129.0,156.8 1130.0,158.4 1131.0,156.3 1132.0,159.8 1133.0,162.7 1134.0,160.3 1135.0,156.7 1136.0,156.2 1137.0,156.0 1138.0,155.4 1139.0,154.4 1140.0,154.1 1141.0,154.9 1142.0,157.3 1143.0,154.0 1144.0,155.5 1145.0,157.9 1146.0,157.2 1147.0,159.0 1148.0,156.0 1149.0,153.6 1150.0,156.3 1151.0,158.2 1152.0,154.9 1153.0,159.0 1154.0,157.6 1155.0,159.3 1156.0,158.7 1157.0,158.0 1158.0,158.6 1159.0,158.6 1160.0,155.4 1161.0,156.7 1162.0,159.2 1163.0,159.2 1164.0,157.2 1165.0,154.6 1166.0,156.8 1167.0,154.9 1168.0,155.6 1169.0,155.0 1170.0,156.9 1171.0,157.3 1172.0,155.5 1173.0,157.3 1174.0,155.9 1175.0,153.6 1176.0,155.0 1177.0,154.6 1178.0,157.8 1179.0,155.8 1180.0,154.0 1181.0,156.4 1182.0,155.8 1183.0,157.7 1184.0,155.8 1185.0,158.1 1186.0,153.9 1187.0,153.1 1188.0,153.4 1189.0,154.3 1190.0,156.8 1191.0,156.6 1192.0,156.0 1193.0,155.9 1194.0,156.8 1195.0,156.0 1196.0,155.5 1197.0,157.4 1198.0,156.3 1199.0,159.1 1200.0,160.7 1201.0,154.2 1202.0,157.1 1203.0,159.4 1204.0,159.7 1205.0,158.0 1206.0,154.9 1207.0,154.6 1208.0,155.8 1209.0,157.0 1210.0,156.4 1211.0,157.5 1212.0,157.8 1213.0,157.0 1214.0,155.1 1215.0,155.5 1216.0,154.4 1217.0,155.1 1218.0,154.1 1219.0,153.6 1220.0,155.1 1221.0,156.1 1222.0,155.8 1223.0,155.4 1224.0,155.9 1225.0,156.8 1226.0,156.9 1227.0,161.7 1228.0,155.4 1229.0,155.7 1230.0,154.9 1231.0,153.2 1232.0,154.5 1233.0,151.8 1234.0,155.2 1235.0,156.5 1236.0,157.4 1237.0,156.7 1238.0,156.4 1239.0,155.9 1240.0,156.7 1241.0,158.1 1242.0,159.5 1243.0,158.0 1244.0,158.7 1245.0,156.3 1246.0,158.3 1247.0,158.2 1248.0,156.2 1249.0,155.8 1250.0,153.8 1251.0,154.0 1252.0,153.4 1253.0,158.4 1254.0,155.4 1255.0,159.8 1256.0,157.3 1257.0,156.9 1258.0,156.8 1259.0,153.9 1260.0,154.9 1261.0,156.8 1262.0,157.0 1263.0,152.7 1264.0,156.4 1265.0,154.3 1266.0,152.3 1267.0,153.1 1268.0,152.6 1269.0,153.9 1270.0,155.7 1271.0,154.6 1272.0,155.3 1273.0,155.3 1274.0,157.2 1275.0,159.1 1276.0,156.6 1277.0,158.6 1278.0,158.1 1279.0,158.6 1280.0,158.5 1281.0,157.9 1282.0,154.7 1283.0,156.2 1284.0,158.0 1285.0,157.7 1286.0,155.5 1287.0,150.1 1288.0,153.7 1289.0,152.8 1290.0,153.9 1291.0,158.7 1292.0,162.6 1293.0,152.8 1294.0,152.2 1295.0,156.6 1296.0,160.0 1297.0,159.1 1298.0,154.6 1299.0,156.0 1300.0,156.0 1301.0,158.5 1302.0,155.5 1303.0,159.6 1304.0,160.1 1305.0,154.6 1306.0,156.8 1307.0,151.4 1308.0,151.6 1309.0,154.7 1310.0,157.3 1311.0,154.2 1312.0,152.2 1313.0,151.3 1314.0,152.9 1315.0,156.9 1316.0,155.9 1317.0,155.1 1318.0,156.7 1319.0,154.9 1320.0,155.6 1321.0,157.3 1322.0,156.6 1323.0,154.4 1324.0,154.3 1325.0,156.2 1326.0,153.0 1327.0,160.2 1328.0,159.5 1329.0,158.2 1330.0,152.0 1331.0,149.7 1332.0,152.9 1333.0,156.8 1334.0,156.1 1335.0,152.3 1336.0,153.0 1337.0,154.1 1338.0,155.8 1339.0,155.9 1340.0,153.8 1341.0,155.1 1342.0,157.1 1343.0,156.9 1344.0,157.7 1345.0,160.2 1346.0,159.2 1347.0,158.4 1348.0,157.1 1349.0,156.4 1350.0,153.2 1351.0,157.5 1352.0,156.4 1353.0,155.9 1354.0,154.5 1355.0,153.3 1356.0,156.3 1357.0,151.5 1358.0,152.4 1359.0,152.2 1360.0,152.9 1361.0,153.5 1362.0,155.8 1363.0,152.9 1364.0,152.0 1365.0,155.3 1366.0,153.4 1367.0,156.1 1368.0,158.2 1369.0,157.7 1370.0,160.1 1371.0,159.7 1372.0,155.9 1373.0,154.6 1374.0,156.5 1375.0,156.3 1376.0,159.8 1377.0,157.0 1378.0,153.1 1379.0,152.8 1380.0,157.0 1381.0,155.8 1382.0,152.8 1383.0,149.0 1384.0,154.4 1385.0,156.1 1386.0,153.8 1387.0,152.8 1388.0,151.5 1389.0,156.0 1390.0,156.0 1391.0,157.3 1392.0,156.1 1393.0,155.6 1394.0,152.6 1395.0,153.5 1396.0,156.5 1397.0,151.5 1398.0,150.1 1399.0,148.9 1400.0,151.2 1401.0,153.5 1402.0,150.8 1403.0,157.6 1404.0,153.0 1405.0,157.4 1406.0,155.7 1407.0,156.4 1408.0,157.7 1409.0,158.8 1410.0,157.4 1411.0,159.2 1412.0,160.1 1413.0,158.4 1414.0,158.3 1415.0,156.3 1416.0,154.4 1417.0,155.2 1418.0,156.1 1419.0,158.7 1420.0,155.4 1421.0,152.5 1422.0,156.1 1423.0,152.3 1424.0,152.1 1425.0,155.3 1426.0,156.4 1427.0,154.6 1428.0,156.6 1429.0,156.8 1430.0,155.4 1431.0,157.4 1432.0,154.5 1433.0,152.2 1434.0,151.8 1435.0,154.7 1436.0,151.7 1437.0,149.3 1438.0,153.7 1439.0,150.5 1440.0,153.6 1441.0,157.5 1442.0,156.2 1443.0,155.5 1444.0,151.4 1445.0,154.6 1446.0,151.7 1447.0,156.0 1448.0,152.6 1449.0,148.0 1450.0,152.1 1451.0,155.8 1452.0,155.8 1453.0,159.1 1454.0,156.3 1455.0,151.9 1456.0,155.3 1457.0,158.4 1458.0,159.0 1459.0,155.4 1460.0,155.9 1461.0,155.8 1462.0,155.2 1463.0,153.7 1464.0,152.8 1465.0,154.5 1466.0,154.4 1467.0,151.7 1468.0,155.5 1469.0,148.8 1470.0,153.8 1471.0,151.7 1472.0,152.7 1473.0,153.2 1474.0,157.5 1475.0,158.2 1476.0,154.7 1477.0,156.9 1478.0,150.4 1479.0,151.5 1480.0,153.5 1481.0,159.4 1482.0,157.9 1483.0,158.3 1484.0,155.3 1485.0,154.4 1486.0,152.9 1487.0,151.6 1488.0,152.1 1489.0,153.5 1490.0,153.6 1491.0,153.1 1492.0,150.1 1493.0,151.7 1494.0,151.4 1495.0,147.9 1496.0,153.5 1497.0,153.1 1498.0,150.0 1499.0,152.1 1500.0,152.9 1501.0,153.6 1502.0,152.3 1503.0,154.9 1504.0,155.4 1505.0,156.9 1506.0,158.3 1507.0,155.1 1508.0,155.2 1509.0,154.3 1510.0,152.4 1511.0,150.1 1512.0,154.8 1513.0,156.1 1514.0,155.6 1515.0,155.1 1516.0,153.5 1517.0,154.1 1518.0,153.4 1519.0,153.1 1520.0,151.2 1521.0,153.6 1522.0,152.7 1523.0,153.2 1524.0,158.0 1525.0,156.0 1526.0,155.5 1527.0,157.0 1528.0,155.1 1529.0,155.7 1530.0,151.5 1531.0,152.0 1532.0,154.4 1533.0,153.2 1534.0,151.9 1535.0,152.7 1536.0,154.7 1537.0,155.5 1538.0,153.3 1539.0,151.0 1540.0,152.2 1541.0,152.7 1542.0,153.2 1543.0,153.8 1544.0,151.1 1545.0,155.6 1546.0,152.8 1547.0,152.3 1548.0,155.6 1549.0,153.8 1550.0,154.1 1551.0,155.8 1552.0,152.6 1553.0,153.6 1554.0,154.5 1555.0,154.7 1556.0,153.3 1557.0,154.6 1558.0,155.8 1559.0,156.5 1560.0,155.9 1561.0,155.0 1562.0,156.6 1563.0,152.7 1564.0,152.8 1565.0,152.2 1566.0,152.5 1567.0,151.4 1568.0,154.7 1569.0,154.6 1570.0,156.7 1571.0,155.8 1572.0,153.3 1573.0,151.9 1574.0,151.4 1575.0,154.0 1576.0,154.3 1577.0,151.3 1578.0,152.0 1579.0,154.1 1580.0,156.8 1581.0,154.0 1582.0,155.1 1583.0,152.9 1584.0,156.1 1585.0,155.0 1586.0,157.7 1587.0,155.1 1588.0,155.6 1589.0,149.8 1590.0,153.9 1591.0,159.1 1592.0,155.3 1593.0,154.1 1594.0,159.9 1595.0,154.7 1596.0,154.0 1597.0,154.0 1598.0,152.8 1599.0,155.1 1600.0,150.5 1601.0,151.6 1602.0,154.7 1603.0,152.1 1604.0,155.7 1605.0,155.3 1606.0,151.4 1607.0,154.4 1608.0,152.9 1609.0,154.3 1610.0,156.1 1611.0,155.6 1612.0,155.3 1613.0,154.3 1614.0,154.9 1615.0,154.4 1616.0,153.6 1617.0,152.7 1618.0,149.6 1619.0,153.4 1620.0,153.6 1621.0,148.8 1622.0,151.5 1623.0,155.1 1624.0,154.6 1625.0,154.8 1626.0,153.7 1627.0,153.4 1628.0,152.1 1629.0,149.8 1630.0,154.3 1631.0,153.2 1632.0,151.7 1633.0,154.5 1634.0,155.0 1635.0,154.6 1636.0,152.7 1637.0,155.2 1638.0,154.8 1639.0,156.3 1640.0,156.1 1641.0,153.7 1642.0,154.5 1643.0,152.0 1644.0,154.9 1645.0,153.4 1646.0,151.3 1647.0,153.0 1648.0,153.3 1649.0,150.1 1650.0,149.9 1651.0,152.4 1652.0,157.5 1653.0,152.5 1654.0,153.7 1655.0,152.7 1656.0,152.2 1657.0,152.2 1658.0,153.4 1659.0,156.8 1660.0,152.4 1661.0,150.7 1662.0,153.4 1663.0,152.5 1664.0,153.1 1665.0,153.7 1666.0,154.9 1667.0,157.2 1668.0,153.8 1669.0,153.3 1670.0,150.0 1671.0,149.5 1672.0,153.7 1673.0,151.2 1674.0,156.4 1675.0,155.5 1676.0,154.4 1677.0,156.2 1678.0,153.4 1679.0,152.5 1680.0,155.2 1681.0,151.7 1682.0,153.2 1683.0,156.4 1684.0,151.6 1685.0,152.9 1686.0,153.5 1687.0,152.2 1688.0,151.8 1689.0,151.9 1690.0,150.0 1691.0,151.4 1692.0,151.1 1693.0,152.8 1694.0,156.4 1695.0,155.6 1696.0,153.8 1697.0,149.2 1698.0,151.0 1699.0,152.1 1700.0,152.0 1701.0,156.2 1702.0,151.4 1703.0,154.0 1704.0,152.7 1705.0,149.5 1706.0,150.7 1707.0,153.4 1708.0,153.2 1709.0,152.0 1710.0,151.7 1711.0,157.8 1712.0,158.4 1713.0,157.8 1714.0,155.6 1715.0,152.6 1716.0,155.3 1717.0,151.8 1718.0,154.1 1719.0,155.2 1720.0,159.6 1721.0,163.1 1722.0,169.2 1723.0,175.8 1724.0,180.3 1725.0,186.2 1726.0,191.3 1727.0,195.8 1728.0,196.3 1729.0,199.7 1730.0,196.3 1731.0,195.0 1732.0,195.0 1733.0,206.9 1734.0,203.6 1735.0,206.7 1736.0,200.6 1737.0,200.2 1738.0,200.6 1739.0,199.6 1740.0,203.1 1741.0,203.6 1742.0,209.7 1743.0,207.5 1744.0,209.3 1745.0,206.2 1746.0,205.6 1747.0,204.2 1748.0,202.1 1749.0,203.0 1750.0,202.5 1751.0,204.2 1752.0,208.8 1753.0,209.0 1754.0,203.8 1755.0,201.2 1756.0,204.7 1757.0,208.8 1758.0,207.9 1759.0,205.1 1760.0,205.0 1761.0,211.1 1762.0,208.6 1763.0,206.8 1764.0,208.1 1765.0,207.9 1766.0,211.4 1767.0,213.9 1768.0,213.2 1769.0,211.3 1770.0,212.6 1771.0,210.1 1772.0,211.3 1773.0,210.0 1774.0,216.5 1775.0,211.7 1776.0,213.9 1777.0,212.2 1778.0,207.9 1779.0,209.0 1780.0,207.2 1781.0,204.7 1782.0,209.4 1783.0,207.2 1784.0,206.4 1785.0,211.8 1786.0,208.5 1787.0,209.8 1788.0,206.1 1789.0,210.5 1790.0,210.0 1791.0,209.3 1792.0,205.7 1793.0,204.1 1794.0,210.5 1795.0,206.8 1796.0,212.4 1797.0,208.6 1798.0,207.6 1799.0,208.1 1800.0,208.6 1801.0,211.4 1802.0,208.3 1803.0,208.6 1804.0,204.8 1805.0,207.9 1806.0,211.1 1807.0,208.7 1808.0,215.6 1809.0,208.7 1810.0,213.6 1811.0,217.6 1812.0,208.8 1813.0,212.0 1814.0,211.2 1815.0,207.7 1816.0,207.4 1817.0,200.9 1818.0,200.8 1819.0,201.6 1820.0,205.2 1821.0,209.2 1822.0,210.3 1823.0,215.3 1824.0,210.6 1825.0,207.5 1826.0,210.7 1827.0,212.3" fill="none" stroke="#efefef" stroke-width="1"/><path d="M979.1 41V265.2" stroke="#d8504a" stroke-width="2.1"/><path d="M1403.5 42.0V264.75" stroke="#e6e640" stroke-width="1" shape-rendering="crispEdges"/></svg>
<span class="t" style="left:924px;top:30px;font-size:21.08px;color:#fff;transform:translateX(0.49px) scaleX(0.9754);">40.0</span>
<span class="t" style="left:923px;top:76px;font-size:21.08px;color:#fff;transform:translateX(0.91px) scaleX(0.9898);">20.0</span>
<span class="t" style="left:935px;top:120px;font-size:21.08px;color:#fff;transform:translateX(0.93px) scaleX(0.9742);">0.0</span>
<span class="t" style="left:917px;top:165px;font-size:21.08px;color:#fff;transform:translateX(0.37px) scaleX(0.9814);">-20.0</span>
<span class="t" style="left:917px;top:210px;font-size:21.08px;color:#fff;transform:translateX(0.37px) scaleX(0.9814);">-40.0</span>
<span class="t" style="left:917px;top:253px;font-size:21.08px;color:#fff;transform:translateX(0.37px) scaleX(0.9814);">-60.0</span>
<span class="t" style="left:1001px;top:271px;font-size:21.08px;color:#fff;transform:translateX(0.99px) scaleX(0.9442);">188</span>
<span class="t" style="left:1076px;top:271px;font-size:21.08px;color:#fff;transform:translateX(0.73px) scaleX(0.9442);">188.2</span>
<span class="t" style="left:1159px;top:271px;font-size:21.08px;color:#fff;transform:translateX(0.53px) scaleX(0.9442);">188.4</span>
<span class="t" style="left:1242px;top:271px;font-size:21.08px;color:#fff;transform:translateX(0.68px) scaleX(0.9442);">188.6</span>
<span class="t" style="left:1325px;top:271px;font-size:21.08px;color:#fff;transform:translateX(0.68px) scaleX(0.9442);">188.8</span>
<span class="t" style="left:1417px;top:271px;font-size:21.08px;color:#fff;transform:translateX(0.01px) scaleX(0.9442);">189</span>
<span class="t" style="left:1490px;top:271px;font-size:21.08px;color:#fff;transform:translateX(0.73px) scaleX(0.9442);">189.2</span>
<span class="t" style="left:1573px;top:271px;font-size:21.08px;color:#fff;transform:translateX(0.53px) scaleX(0.9442);">189.4</span>
<span class="t" style="left:1656px;top:271px;font-size:21.08px;color:#fff;transform:translateX(0.68px) scaleX(0.9442);">189.6</span>
<span class="t" style="left:1739px;top:271px;font-size:21.08px;color:#fff;transform:translateX(0.68px) scaleX(0.9442);">189.8</span>
<span class="t" style="left:1311px;top:301px;font-size:23.98px;color:#fff;transform:translateX(0.04px) scaleX(0.9902);">Frequency (MHz)</span>
<span class="t" style="left:862.40px;top:235.55px;font-size:23.98px;color:#fff;transform:rotate(-90deg) scaleX(0.9878);">Magnitude (dB)</span>
<svg style="left:1066px;top:438px;width:789px;height:471px" viewBox="1066 438 789 471"><rect x="1433.0" y="466.5" width="101.50" height="353.75" fill="#404040"/><path d="M1433.0 537.30H1847.0 M1433.0 608.00H1847.0 M1433.0 679.20H1847.0 M1433.0 750.10H1847.0 M1451.50 466.5V820.25 M1478.50 466.5V820.25 M1506.50 466.5V820.25 M1562.50 466.5V820.25 M1590.50 466.5V820.25 M1617.50 466.5V820.25 M1645.50 466.5V820.25 M1673.50 466.5V820.25 M1701.50 466.5V820.25 M1728.50 466.5V820.25 M1756.50 466.5V820.25 M1784.50 466.5V820.25 M1812.50 466.5V820.25 M1839.50 466.5V820.25" stroke="rgba(218,218,218,0.62)" stroke-width="1" fill="none" shape-rendering="crispEdges"/><path d="M1433.0 466H1848M1847 466V820.25" stroke="#8e8e8e" stroke-width="2" fill="none" shape-rendering="crispEdges"/><path d="M1433.0 820.4H1848" stroke="#969696" stroke-width="1.5" fill="none"/><polyline points="1434.00,790 1434.22,800 1434.44,820 1434.66,782 1434.88,796 1435.10,790 1435.32,796 1435.54,806 1435.76,806 1435.98,789 1436.20,800 1436.42,800 1436.64,786 1436.86,807 1437.08,779 1437.30,794 1437.52,773 1437.74,782 1437.96,792 1438.18,747 1438.40,794 1438.62,793 1438.84,762 1439.06,785 1439.28,799 1439.50,791 1439.72,763 1439.94,766 1440.16,796 1440.38,783 1440.60,798 1440.82,779 1441.04,768 1441.26,756 1441.48,779 1441.70,794 1441.92,791 1442.14,814 1442.36,789 1442.58,802 1442.80,799 1443.02,819 1443.24,820 1443.46,820 1443.68,782 1443.90,820 1444.12,785 1444.34,806 1444.56,812 1444.78,803 1445.00,801 1445.22,770 1445.44,806 1445.66,788 1445.88,788 1446.10,804 1446.32,806 1446.54,791 1446.76,802 1446.98,820 1447.20,820 1447.42,800 1447.64,810 1447.86,813 1448.08,820 1448.30,813 1448.52,787 1448.74,803 1448.96,820 1449.18,807 1449.40,805 1449.62,820 1449.84,771 1450.06,804 1450.28,794 1450.50,804 1450.72,784 1450.94,808 1451.16,767 1451.38,796 1451.60,797 1451.82,772 1452.04,806 1452.26,779 1452.48,763 1452.70,798 1452.92,796 1453.14,780 1453.36,802 1453.58,801 1453.80,779 1454.02,790 1454.24,795 1454.46,781 1454.68,776 1454.90,778 1455.12,796 1455.34,796 1455.56,810 1455.78,803 1456.00,800 1456.22,738 1456.44,767 1456.66,804 1456.88,786 1457.10,810 1457.32,806 1457.54,802 1457.76,793 1457.98,820 1458.20,768 1458.42,769 1458.64,786 1458.86,769 1459.08,776 1459.30,799 1459.52,795 1459.74,784 1459.96,808 1460.18,798 1460.40,796 1460.62,779 1460.84,792 1461.06,767 1461.28,751 1461.50,820 1461.72,783 1461.94,784 1462.16,798 1462.38,820 1462.60,784 1462.82,777 1463.04,795 1463.26,782 1463.48,762 1463.70,788 1463.92,820 1464.14,770 1464.36,785 1464.58,801 1464.80,790 1465.02,781 1465.24,781 1465.46,799 1465.68,787 1465.90,762 1466.12,775 1466.34,799 1466.56,745 1466.78,786 1467.00,793 1467.22,774 1467.44,775 1467.66,820 1467.88,809 1468.10,763 1468.32,790 1468.54,795 1468.76,791 1468.98,788 1469.20,784 1469.42,767 1469.64,778 1469.86,771 1470.08,795 1470.30,772 1470.52,790 1470.74,774 1470.96,799 1471.18,794 1471.40,787 1471.62,811 1471.84,785 1472.06,777 1472.28,796 1472.50,779 1472.72,805 1472.94,806 1473.16,820 1473.38,819 1473.60,814 1473.82,817 1474.04,769 1474.26,779 1474.48,788 1474.70,810 1474.92,787 1475.14,785 1475.36,811 1475.58,782 1475.80,803 1476.02,813 1476.24,793 1476.46,794 1476.68,788 1476.90,785 1477.12,809 1477.34,775 1477.56,791 1477.78,771 1478.00,811 1478.22,795 1478.44,791 1478.66,800 1478.88,794 1479.10,759 1479.32,776 1479.54,767 1479.76,780 1479.98,786 1480.20,820 1480.42,769 1480.64,793 1480.86,801 1481.08,761 1481.30,770 1481.52,779 1481.74,778 1481.96,785 1482.18,774 1482.40,812 1482.62,791 1482.84,791 1483.06,785 1483.28,776 1483.50,802 1483.72,793 1483.94,762 1484.16,810 1484.38,790 1484.60,797 1484.82,775 1485.04,760 1485.26,791 1485.48,804 1485.70,755 1485.92,794 1486.14,783 1486.36,796 1486.58,774 1486.80,771 1487.02,792 1487.24,795 1487.46,797 1487.68,789 1487.90,816 1488.12,814 1488.34,805 1488.56,782 1488.78,820 1489.00,808 1489.22,781 1489.44,782 1489.66,776 1489.88,806 1490.10,775 1490.32,805 1490.54,771 1490.76,806 1490.98,783 1491.20,780 1491.42,798 1491.64,750 1491.86,794 1492.08,811 1492.30,751 1492.52,749 1492.74,760 1492.96,771 1493.18,768 1493.40,790 1493.62,784 1493.84,790 1494.06,779 1494.28,770 1494.50,782 1494.72,764 1494.94,813 1495.16,754 1495.38,787 1495.60,797 1495.82,797 1496.04,789 1496.26,774 1496.48,766 1496.70,784 1496.92,800 1497.14,783 1497.36,787 1497.58,795 1497.80,784 1498.02,790 1498.24,796 1498.46,814 1498.68,782 1498.90,782 1499.12,772 1499.34,754 1499.56,770 1499.78,782 1500.00,763 1500.22,785 1500.44,783 1500.66,774 1500.88,798 1501.10,793 1501.32,774 1501.54,771 1501.76,771 1501.98,794 1502.20,782 1502.42,768 1502.64,782 1502.86,810 1503.08,775 1503.30,766 1503.52,787 1503.74,784 1503.96,767 1504.18,791 1504.40,798 1504.62,771 1504.84,782 1505.06,817 1505.28,784 1505.50,783 1505.72,765 1505.94,766 1506.16,762 1506.38,784 1506.60,772 1506.82,798 1507.04,787 1507.26,776 1507.48,756 1507.70,788 1507.92,782 1508.14,797 1508.36,773 1508.58,765 1508.80,769 1509.02,771 1509.24,778 1509.46,779 1509.68,793 1509.90,760 1510.12,804 1510.34,766 1510.56,774 1510.78,771 1511.00,785 1511.22,788 1511.44,781 1511.66,776 1511.88,768 1512.10,770 1512.32,795 1512.54,799 1512.76,768 1512.98,777 1513.20,761 1513.42,760 1513.64,794 1513.86,777 1514.08,782 1514.30,801 1514.52,793 1514.74,794 1514.96,771 1515.18,776 1515.27,780 1515.36,761 1515.45,773 1515.54,769 1515.63,747 1515.72,801 1515.81,779 1515.90,770 1515.99,766 1516.08,762 1516.17,768 1516.26,764 1516.35,779 1516.44,803 1516.53,756 1516.62,762 1516.71,753 1516.80,777 1516.89,763 1516.98,746 1517.07,761 1517.16,766 1517.25,753 1517.34,774 1517.43,765 1517.52,755 1517.61,796 1517.70,741 1517.79,760 1517.88,786 1517.97,772 1518.06,766 1518.15,753 1518.24,764 1518.33,787 1518.42,768 1518.51,766 1518.60,764 1518.69,789 1518.78,773 1518.87,779 1518.96,779 1519.05,776 1519.14,772 1519.23,787 1519.32,760 1519.41,751 1519.50,759 1519.59,771 1519.68,789 1519.77,793 1519.86,778 1519.95,764 1520.04,764 1520.13,762 1520.22,779 1520.31,752 1520.40,759 1520.49,752 1520.58,743 1520.67,780 1520.76,783 1520.85,763 1520.94,749 1521.03,764 1521.12,763 1521.21,777 1521.30,761 1521.39,776 1521.48,761 1521.57,762 1521.66,765 1521.75,773 1521.84,750 1521.93,720 1522.02,744 1522.11,738 1522.20,731 1522.29,770 1522.38,753 1522.47,753 1522.56,753 1522.65,744 1522.74,739 1522.83,749 1522.92,737 1523.01,754 1523.10,758 1523.19,769 1523.28,749 1523.37,783 1523.46,746 1523.55,753 1523.64,761 1523.73,738 1523.82,751 1523.91,755 1524.00,760 1524.09,749 1524.18,726 1524.27,754 1524.36,744 1524.45,765 1524.54,759 1524.63,748 1524.72,763 1524.81,734 1524.90,732 1524.99,742 1525.08,759 1525.17,737 1525.26,742 1525.35,738 1525.44,739 1525.53,732 1525.62,760 1525.71,739 1525.80,747 1525.89,748 1525.98,739 1526.07,745 1526.16,744 1526.25,744 1526.34,730 1526.43,752 1526.52,743 1526.61,738 1526.70,741 1526.79,755 1526.88,744 1526.97,723 1527.06,742 1527.15,743 1527.24,758 1527.33,732 1527.42,725 1527.51,741 1527.60,742 1527.69,743 1527.78,726 1527.87,725 1527.96,736 1528.05,741 1528.14,753 1528.23,723 1528.32,720 1528.41,732 1528.50,704 1528.59,731 1528.68,730 1528.77,729 1528.86,722 1528.95,736 1529.04,724 1529.13,724 1529.22,724 1529.31,724 1529.40,710 1529.49,725 1529.58,716 1529.67,726 1529.76,724 1529.85,736 1529.94,728 1530.03,718 1530.12,717 1530.21,713 1530.30,720 1530.39,713 1530.48,708 1530.57,708 1530.66,714 1530.75,705 1530.84,725 1530.93,717 1531.02,709 1531.11,707 1531.20,712 1531.29,694 1531.38,704 1531.47,693 1531.56,711 1531.65,697 1531.74,690 1531.83,712 1531.92,687 1532.01,684 1532.10,685 1532.19,695 1532.28,685 1532.37,703 1532.46,676 1532.55,683 1532.64,680 1532.73,676 1532.82,672 1532.91,672 1533.00,678 1533.09,668 1533.18,663 1533.27,657 1533.36,669 1533.45,648 1533.54,654 1533.63,648 1533.72,639 1533.81,656 1533.90,638 1533.99,636 1534.08,638 1534.17,637 1534.26,634 1534.35,639 1534.44,638 1534.53,640 1534.62,642 1534.71,636 1534.80,635 1534.89,634 1534.98,640 1535.07,667 1535.16,654 1535.25,668 1535.34,664 1535.43,660 1535.52,674 1535.61,662 1535.70,686 1535.79,676 1535.88,676 1535.97,678 1536.06,682 1536.15,672 1536.24,682 1536.33,686 1536.42,677 1536.51,684 1536.60,705 1536.69,703 1536.78,700 1536.87,687 1536.96,711 1537.05,700 1537.14,704 1537.23,712 1537.32,712 1537.41,718 1537.50,706 1537.59,704 1537.68,711 1537.77,687 1537.86,693 1537.95,702 1538.04,722 1538.13,712 1538.22,702 1538.31,722 1538.40,716 1538.49,722 1538.58,727 1538.67,702 1538.76,720 1538.85,707 1538.94,719 1539.03,729 1539.12,731 1539.21,727 1539.30,735 1539.39,716 1539.48,735 1539.57,746 1539.66,741 1539.75,730 1539.84,734 1539.93,719 1540.02,728 1540.11,730 1540.20,715 1540.29,728 1540.38,740 1540.47,727 1540.56,745 1540.65,720 1540.74,742 1540.83,723 1540.92,731 1541.01,747 1541.10,718 1541.19,735 1541.28,733 1541.37,740 1541.46,726 1541.55,732 1541.64,736 1541.73,739 1541.82,736 1541.91,735 1542.00,728 1542.09,735 1542.18,747 1542.27,733 1542.36,742 1542.45,737 1542.54,753 1542.63,752 1542.72,749 1542.81,756 1542.90,730 1542.99,736 1543.08,732 1543.17,727 1543.26,740 1543.35,740 1543.44,745 1543.53,727 1543.62,724 1543.71,749 1543.80,728 1543.89,757 1543.98,744 1544.07,727 1544.16,718 1544.25,759 1544.34,730 1544.43,731 1544.52,719 1544.61,736 1544.70,775 1544.79,735 1544.88,748 1544.97,738 1545.06,730 1545.15,745 1545.24,737 1545.33,747 1545.42,757 1545.51,747 1545.60,769 1545.69,742 1545.78,745 1545.87,738 1545.96,737 1546.05,730 1546.14,743 1546.23,742 1546.32,736 1546.41,735 1546.50,749 1546.59,768 1546.68,736 1546.77,722 1546.86,733 1546.95,760 1547.04,776 1547.13,754 1547.22,759 1547.31,740 1547.40,740 1547.49,758 1547.58,761 1547.67,750 1547.76,735 1547.85,752 1547.94,730 1548.03,730 1548.12,766 1548.21,764 1548.30,761 1548.39,763 1548.48,744 1548.57,744 1548.66,764 1548.75,769 1548.84,767 1548.93,735 1549.02,752 1549.11,756 1549.20,769 1549.29,744 1549.38,743 1549.47,760 1549.56,758 1549.65,749 1549.74,757 1549.83,758 1549.92,754 1550.01,749 1550.10,759 1550.19,738 1550.28,768 1550.37,752 1550.46,730 1550.55,741 1550.64,736 1550.73,749 1550.82,758 1550.91,744 1551.00,741 1551.09,752 1551.18,766 1551.27,748 1551.36,737 1551.45,769 1551.54,744 1551.63,742 1551.72,773 1551.81,744 1551.90,740 1551.99,750 1552.08,758 1552.17,728 1552.26,744 1552.35,758 1552.44,748 1552.53,786 1552.62,752 1552.71,756 1552.80,758 1552.89,758 1552.98,719 1553.07,757 1553.16,770 1553.25,745 1553.34,766 1553.43,753 1553.52,744 1553.61,735 1553.70,759 1553.79,761 1553.88,771 1553.97,745 1554.19,754 1554.41,760 1554.63,755 1554.85,739 1555.07,753 1555.29,774 1555.51,750 1555.73,772 1555.95,749 1556.17,745 1556.39,757 1556.61,779 1556.83,753 1557.05,756 1557.27,771 1557.49,756 1557.71,773 1557.93,760 1558.15,772 1558.37,723 1558.59,751 1558.81,769 1559.03,762 1559.25,750 1559.47,760 1559.69,773 1559.91,756 1560.13,779 1560.35,763 1560.57,765 1560.79,776 1561.01,765 1561.23,767 1561.45,793 1561.67,782 1561.89,776 1562.11,791 1562.33,764 1562.55,752 1562.77,770 1562.99,769 1563.21,781 1563.43,775 1563.65,764 1563.87,787 1564.09,744 1564.31,759 1564.53,776 1564.75,753 1564.97,774 1565.19,765 1565.41,769 1565.63,795 1565.85,769 1566.07,786 1566.29,769 1566.51,732 1566.73,768 1566.95,780 1567.17,787 1567.39,749 1567.61,757 1567.83,771 1568.05,771 1568.27,742 1568.49,758 1568.71,749 1568.93,797 1569.15,779 1569.37,770 1569.59,778 1569.81,785 1570.03,785 1570.25,759 1570.47,780 1570.69,754 1570.91,736 1571.13,780 1571.35,758 1571.57,741 1571.79,772 1572.01,759 1572.23,778 1572.45,798 1572.67,795 1572.89,808 1573.11,782 1573.33,775 1573.55,768 1573.77,760 1573.99,802 1574.21,779 1574.43,777 1574.65,736 1574.87,758 1575.09,769 1575.31,781 1575.53,799 1575.75,785 1575.97,748 1576.19,803 1576.41,784 1576.63,793 1576.85,768 1577.07,780 1577.29,757 1577.51,776 1577.73,790 1577.95,791 1578.17,793 1578.39,765 1578.61,788 1578.83,762 1579.05,779 1579.27,749 1579.49,778 1579.71,813 1579.93,761 1580.15,763 1580.37,748 1580.59,749 1580.81,784 1581.03,795 1581.25,783 1581.47,800 1581.69,772 1581.91,794 1582.13,790 1582.35,786 1582.57,775 1582.79,776 1583.01,773 1583.23,774 1583.45,774 1583.67,805 1583.89,764 1584.11,763 1584.33,770 1584.55,787 1584.77,789 1584.99,769 1585.21,777 1585.43,778 1585.65,796 1585.87,772 1586.09,800 1586.31,787 1586.53,794 1586.75,781 1586.97,789 1587.19,759 1587.41,761 1587.63,809 1587.85,789 1588.07,782 1588.29,800 1588.51,793 1588.73,788 1588.95,773 1589.17,783 1589.39,778 1589.61,769 1589.83,770 1590.05,794 1590.27,766 1590.49,803 1590.71,794 1590.93,779 1591.15,795 1591.37,795 1591.59,800 1591.81,781 1592.03,799 1592.25,815 1592.47,793 1592.69,764 1592.91,774 1593.13,791 1593.35,785 1593.57,780 1593.79,798 1594.01,803 1594.23,776 1594.45,810 1594.67,778 1594.89,773 1595.11,804 1595.33,784 1595.55,804 1595.77,804 1595.99,796 1596.21,800 1596.43,780 1596.65,772 1596.87,796 1597.09,789 1597.31,795 1597.53,783 1597.75,767 1597.97,788 1598.19,788 1598.41,803 1598.63,788 1598.85,774 1599.07,774 1599.29,800 1599.51,782 1599.73,810 1599.95,790 1600.17,764 1600.39,774 1600.61,803 1600.83,817 1601.05,792 1601.27,787 1601.49,799 1601.71,799 1601.93,808 1602.15,776 1602.37,798 1602.59,810 1602.81,787 1603.03,786 1603.25,796 1603.47,799 1603.69,770 1603.91,803 1604.13,803 1604.35,809 1604.57,779 1604.79,800 1605.01,775 1605.23,777 1605.45,810 1605.67,820 1605.89,803 1606.11,794 1606.33,793 1606.55,799 1606.77,798 1606.99,820 1607.21,796 1607.43,806 1607.65,789 1607.87,810 1608.09,810 1608.31,806 1608.53,784 1608.75,815 1608.97,776 1609.19,798 1609.41,788 1609.63,801 1609.85,796 1610.07,792 1610.29,772 1610.51,778 1610.73,799 1610.95,786 1611.17,796 1611.39,771 1611.61,787 1611.83,792 1612.05,754 1612.27,774 1612.49,770 1612.71,782 1612.93,783 1613.15,780 1613.37,793 1613.59,778 1613.81,769 1614.03,786 1614.25,798 1614.47,780 1614.69,798 1614.91,805 1615.13,799 1615.35,779 1615.57,762 1615.79,789 1616.01,800 1616.23,794 1616.45,778 1616.67,772 1616.89,784 1617.11,787 1617.33,820 1617.55,797 1617.77,805 1617.99,802 1618.21,809 1618.43,787 1618.65,788 1618.87,757 1619.09,790 1619.31,788 1619.53,755 1619.75,799 1619.97,820 1620.19,795 1620.41,810 1620.63,774 1620.85,780 1621.07,778 1621.29,772 1621.51,792 1621.73,820 1621.95,799 1622.17,814 1622.39,791 1622.61,808 1622.83,804 1623.05,801 1623.27,814 1623.49,786 1623.71,810 1623.93,815 1624.15,784 1624.37,812 1624.59,782 1624.81,776 1625.03,776 1625.25,799 1625.47,763 1625.69,816 1625.91,788 1626.13,792 1626.35,800 1626.57,793 1626.79,743 1627.01,772 1627.23,780 1627.45,794 1627.67,784 1627.89,794 1628.11,790 1628.33,781 1628.55,778 1628.77,766 1628.99,797 1629.21,804 1629.43,781 1629.65,784 1629.87,785 1630.09,769 1630.31,776 1630.53,766 1630.75,786 1630.97,778 1631.19,778 1631.41,779 1631.63,792 1631.85,800 1632.07,799 1632.29,810 1632.51,785 1632.73,780 1632.95,782 1633.17,798 1633.39,813 1633.61,780 1633.83,800 1634.05,812 1634.27,816 1634.49,810 1634.71,785 1634.93,820 1635.15,783 1635.37,820 1635.59,814 1635.81,798 1636.03,820 1636.25,786 1636.47,779 1636.69,817 1636.91,800 1637.13,785 1637.35,798 1637.57,800 1637.79,782 1638.01,787 1638.23,778 1638.45,820 1638.67,808 1638.89,791 1639.11,785 1639.33,811 1639.55,802 1639.77,790 1639.99,820 1640.21,782 1640.43,812 1640.65,785 1640.87,752 1641.09,787 1641.31,819 1641.53,780 1641.75,790 1641.97,784 1642.19,789 1642.41,810 1642.63,803 1642.85,787 1643.07,787 1643.29,784 1643.51,820 1643.73,781 1643.95,810 1644.17,795 1644.39,782 1644.61,782 1644.83,791 1645.05,791 1645.27,778 1645.49,781 1645.71,785 1645.93,806 1646.15,786 1646.37,783 1646.59,770 1646.81,761 1647.03,813 1647.25,782 1647.47,777 1647.69,768 1647.91,774 1648.13,817 1648.35,791 1648.57,796 1648.79,820 1649.01,786 1649.23,803 1649.45,774 1649.67,792 1649.89,780 1650.11,785 1650.33,809 1650.55,786 1650.77,781 1650.99,792 1651.21,775 1651.43,786 1651.65,759 1651.87,782 1652.09,799 1652.31,776 1652.53,804 1652.75,807 1652.97,808 1653.19,820 1653.41,820 1653.63,800 1653.85,789 1654.07,813 1654.29,795 1654.51,802 1654.73,774 1654.95,820 1655.17,790 1655.39,816 1655.61,787 1655.83,794 1656.05,820 1656.27,798 1656.49,792 1656.71,790 1656.93,795 1657.15,794 1657.37,795 1657.59,820 1657.81,815 1658.03,809 1658.25,787 1658.47,804 1658.69,795 1658.91,796 1659.13,772 1659.35,797 1659.57,816 1659.79,800 1660.01,820 1660.23,789 1660.45,813 1660.67,811 1660.89,765 1661.11,812 1661.33,789 1661.55,797 1661.77,820 1661.99,793 1662.21,800 1662.43,811 1662.65,818 1662.87,775 1663.09,795 1663.31,813 1663.53,808 1663.75,801 1663.97,811 1664.19,800 1664.41,802 1664.63,820 1664.85,758 1665.07,799 1665.29,782 1665.51,789 1665.73,786 1665.95,787 1666.17,799 1666.39,807 1666.61,819 1666.83,808 1667.05,768 1667.27,794 1667.49,814 1667.71,781 1667.93,820 1668.15,818 1668.37,787 1668.59,816 1668.81,811 1669.03,771 1669.25,816 1669.47,820 1669.69,789 1669.91,806 1670.13,794 1670.35,819 1670.57,794 1670.79,820 1671.01,807 1671.23,794 1671.45,808 1671.67,820 1671.89,809 1672.11,814 1672.33,804 1672.55,783 1672.77,776 1672.99,765 1673.21,790 1673.43,798 1673.65,798 1673.87,805 1674.09,802 1674.31,817 1674.53,807 1674.75,799 1674.97,813 1675.19,790 1675.41,806 1675.63,780 1675.85,797 1676.07,806 1676.29,820 1676.51,820 1676.73,796 1676.95,789 1677.17,813 1677.39,789 1677.61,802 1677.83,816 1678.05,771 1678.27,794 1678.49,778 1678.71,813 1678.93,814 1679.15,782 1679.37,790 1679.59,808 1679.81,799 1680.03,808 1680.25,810 1680.47,814 1680.69,758 1680.91,803 1681.13,808 1681.35,809 1681.57,801 1681.79,792 1682.01,808 1682.23,800 1682.45,770 1682.67,792 1682.89,772 1683.11,775 1683.33,775 1683.55,795 1683.77,780 1683.99,820 1684.21,810 1684.43,820 1684.65,772 1684.87,810 1685.09,805 1685.31,805 1685.53,820 1685.75,820 1685.97,774 1686.19,803 1686.41,777 1686.63,807 1686.85,771 1687.07,777 1687.29,772 1687.51,781 1687.73,815 1687.95,770 1688.17,777 1688.39,789 1688.61,795 1688.83,804 1689.05,790 1689.27,820 1689.49,780 1689.71,800 1689.93,789 1690.15,820 1690.37,778 1690.59,815 1690.81,787 1691.03,817 1691.25,809 1691.47,793 1691.69,815 1691.91,785 1692.13,820 1692.35,791 1692.57,806 1692.79,795 1693.01,791 1693.23,787 1693.45,789 1693.67,813 1693.89,765 1694.11,787 1694.33,796 1694.55,785 1694.77,820 1694.99,781 1695.21,788 1695.43,773 1695.65,776 1695.87,817 1696.09,811 1696.31,815 1696.53,800 1696.75,800 1696.97,805 1697.19,793 1697.41,817 1697.63,792 1697.85,796 1698.07,804 1698.29,800 1698.51,820 1698.73,810 1698.95,801 1699.17,812 1699.39,797 1699.61,818 1699.83,797 1700.05,814 1700.27,800 1700.49,807 1700.71,804 1700.93,804 1701.15,808 1701.37,797 1701.59,765 1701.81,772 1702.03,820 1702.25,789 1702.47,796 1702.69,771 1702.91,799 1703.13,792 1703.35,811 1703.57,809 1703.79,812 1704.01,799 1704.23,798 1704.45,801 1704.67,756 1704.89,801 1705.11,820 1705.33,763 1705.55,799 1705.77,810 1705.99,811 1706.21,800 1706.43,775 1706.65,798 1706.87,782 1707.09,797 1707.31,820 1707.53,811 1707.75,820 1707.97,795 1708.19,806 1708.41,802 1708.63,804 1708.85,799 1709.07,819 1709.29,796 1709.51,801 1709.73,792 1709.95,786 1710.17,778 1710.39,795 1710.61,791 1710.83,783 1711.05,809 1711.27,764 1711.49,778 1711.71,764 1711.93,792 1712.15,791 1712.37,820 1712.59,795 1712.81,775 1713.03,785 1713.25,814 1713.47,787 1713.69,789 1713.91,794 1714.13,784 1714.35,794 1714.57,791 1714.79,767 1715.01,790 1715.23,771 1715.45,807 1715.67,802 1715.89,789 1716.11,801 1716.33,778 1716.55,815 1716.77,774 1716.99,786 1717.21,776 1717.43,807 1717.65,794 1717.87,804 1718.09,818 1718.31,787 1718.53,796 1718.75,809 1718.97,801 1719.19,788 1719.41,785 1719.63,804 1719.85,796 1720.07,779 1720.29,818 1720.51,799 1720.73,798 1720.95,806 1721.17,774 1721.39,796 1721.61,817 1721.83,802 1722.05,797 1722.27,814 1722.49,770 1722.71,785 1722.93,767 1723.15,788 1723.37,802 1723.59,810 1723.81,774 1724.03,815 1724.25,820 1724.47,799 1724.69,785 1724.91,769 1725.13,781 1725.35,820 1725.57,809 1725.79,793 1726.01,797 1726.23,786 1726.45,793 1726.67,820 1726.89,797 1727.11,788 1727.33,810 1727.55,802 1727.77,791 1727.99,771 1728.21,809 1728.43,800 1728.65,789 1728.87,788 1729.09,788 1729.31,793 1729.53,784 1729.75,819 1729.97,799 1730.19,815 1730.41,782 1730.63,815 1730.85,808 1731.07,787 1731.29,812 1731.51,816 1731.73,814 1731.95,784 1732.17,799 1732.39,789 1732.61,804 1732.83,820 1733.05,796 1733.27,786 1733.49,803 1733.71,777 1733.93,769 1734.15,752 1734.37,790 1734.59,791 1734.81,773 1735.03,788 1735.25,770 1735.47,789 1735.69,777 1735.91,798 1736.13,820 1736.35,788 1736.57,786 1736.79,783 1737.01,784 1737.23,780 1737.45,790 1737.67,793 1737.89,780 1738.11,771 1738.33,780 1738.55,803 1738.77,802 1738.99,820 1739.21,796 1739.43,800 1739.65,820 1739.87,799 1740.09,756 1740.31,812 1740.53,816 1740.75,796 1740.97,780 1741.19,819 1741.41,801 1741.63,805 1741.85,797 1742.07,802 1742.29,787 1742.51,766 1742.73,807 1742.95,786 1743.17,811 1743.39,796 1743.61,803 1743.83,796 1744.05,762 1744.27,820 1744.49,793 1744.71,820 1744.93,802 1745.15,794 1745.37,808 1745.59,791 1745.81,797 1746.03,794 1746.25,792 1746.47,778 1746.69,815 1746.91,799 1747.13,820 1747.35,816 1747.57,784 1747.79,763 1748.01,820 1748.23,820 1748.45,781 1748.67,799 1748.89,820 1749.11,799 1749.33,795 1749.55,748 1749.77,808 1749.99,798 1750.21,796 1750.43,803 1750.65,819 1750.87,805 1751.09,808 1751.31,778 1751.53,774 1751.75,773 1751.97,802 1752.19,817 1752.41,755 1752.63,780 1752.85,807 1753.07,797 1753.29,793 1753.51,817 1753.73,766 1753.95,795 1754.17,786 1754.39,761 1754.61,807 1754.83,766 1755.05,781 1755.27,798 1755.49,814 1755.71,797 1755.93,776 1756.15,797 1756.37,761 1756.59,775 1756.81,787 1757.03,789 1757.25,771 1757.47,785 1757.69,807 1757.91,795 1758.13,778 1758.35,783 1758.57,776 1758.79,786 1759.01,770 1759.23,819 1759.45,807 1759.67,799 1759.89,778 1760.11,800 1760.33,792 1760.55,774 1760.77,820 1760.99,779 1761.21,803 1761.43,800 1761.65,799 1761.87,799 1762.09,790 1762.31,788 1762.53,808 1762.75,792 1762.97,798 1763.19,771 1763.41,805 1763.63,804 1763.85,776 1764.07,793 1764.29,820 1764.51,799 1764.73,772 1764.95,795 1765.17,794 1765.39,814 1765.61,813 1765.83,820 1766.05,820 1766.27,818 1766.49,802 1766.71,809 1766.93,812 1767.15,788 1767.37,804 1767.59,784 1767.81,773 1768.03,774 1768.25,801 1768.47,795 1768.69,820 1768.91,779 1769.13,779 1769.35,820 1769.57,808 1769.79,786 1770.01,791 1770.23,777 1770.45,787 1770.67,795 1770.89,789 1771.11,768 1771.33,786 1771.55,794 1771.77,798 1771.99,775 1772.21,780 1772.43,802 1772.65,787 1772.87,791 1773.09,745 1773.31,798 1773.53,798 1773.75,782 1773.97,780 1774.19,753 1774.41,807 1774.63,761 1774.85,793 1775.07,798 1775.29,808 1775.51,787 1775.73,794 1775.95,820 1776.17,795 1776.39,794 1776.61,804 1776.83,785 1777.05,784 1777.27,815 1777.49,775 1777.71,820 1777.93,782 1778.15,806 1778.37,820 1778.59,774 1778.81,808 1779.03,774 1779.25,820 1779.47,801 1779.69,819 1779.91,801 1780.13,794 1780.35,802 1780.57,785 1780.79,785 1781.01,789 1781.23,793 1781.45,804 1781.67,820 1781.89,790 1782.11,820 1782.33,792 1782.55,816 1782.77,784 1782.99,793 1783.21,782 1783.43,790 1783.65,807 1783.87,801 1784.09,776 1784.31,804 1784.53,765 1784.75,764 1784.97,808 1785.19,785 1785.41,781 1785.63,787 1785.85,791 1786.07,818 1786.29,806 1786.51,759 1786.73,820 1786.95,810 1787.17,816 1787.39,791 1787.61,753 1787.83,817 1788.05,820 1788.27,795 1788.49,797 1788.71,815 1788.93,816 1789.15,820 1789.37,804 1789.59,790 1789.81,810 1790.03,814 1790.25,801 1790.47,763 1790.69,795 1790.91,803 1791.13,799 1791.35,817 1791.57,776 1791.79,806 1792.01,797 1792.23,803 1792.45,808 1792.67,820 1792.89,792 1793.11,820 1793.33,812 1793.55,811 1793.77,820 1793.99,817 1794.21,817 1794.43,794 1794.65,789 1794.87,810 1795.09,815 1795.31,787 1795.53,789 1795.75,807 1795.97,806 1796.19,799 1796.41,797 1796.63,788 1796.85,807 1797.07,784 1797.29,784 1797.51,774 1797.73,799 1797.95,769 1798.17,804 1798.39,782 1798.61,797 1798.83,788 1799.05,812 1799.27,785 1799.49,792 1799.71,788 1799.93,792 1800.15,820 1800.37,812 1800.59,791 1800.81,776 1801.03,820 1801.25,807 1801.47,820 1801.69,803 1801.91,785 1802.13,820 1802.35,801 1802.57,759 1802.79,812 1803.01,799 1803.23,784 1803.45,798 1803.67,797 1803.89,814 1804.11,789 1804.33,794 1804.55,795 1804.77,806 1804.99,798 1805.21,820 1805.43,792 1805.65,772 1805.87,815 1806.09,795 1806.31,804 1806.53,791 1806.75,801 1806.97,795 1807.19,816 1807.41,808 1807.63,798 1807.85,790 1808.07,820 1808.29,820 1808.51,797 1808.73,820 1808.95,797 1809.17,810 1809.39,798 1809.61,782 1809.83,796 1810.05,801 1810.27,820 1810.49,814 1810.71,813 1810.93,794 1811.15,809 1811.37,801 1811.59,795 1811.81,780 1812.03,808 1812.25,807 1812.47,789 1812.69,795 1812.91,773 1813.13,768 1813.35,781 1813.57,788 1813.79,801 1814.01,783 1814.23,760 1814.45,787 1814.67,807 1814.89,777 1815.11,811 1815.33,776 1815.55,820 1815.77,769 1815.99,777 1816.21,804 1816.43,789 1816.65,820 1816.87,802 1817.09,798 1817.31,793 1817.53,788 1817.75,820 1817.97,801 1818.19,811 1818.41,804 1818.63,788 1818.85,790 1819.07,783 1819.29,803 1819.51,798 1819.73,809 1819.95,820 1820.17,808 1820.39,801 1820.61,820 1820.83,805 1821.05,775 1821.27,763 1821.49,786 1821.71,792 1821.93,817 1822.15,808 1822.37,785 1822.59,807 1822.81,797 1823.03,797 1823.25,804 1823.47,798 1823.69,790 1823.91,773 1824.13,785 1824.35,783 1824.57,792 1824.79,804 1825.01,798 1825.23,771 1825.45,820 1825.67,787 1825.89,792 1826.11,765 1826.33,798 1826.55,783 1826.77,768 1826.99,769 1827.21,770 1827.43,784 1827.65,815 1827.87,820 1828.09,792 1828.31,798 1828.53,798 1828.75,783 1828.97,820 1829.19,791 1829.41,805 1829.63,803 1829.85,793 1830.07,811 1830.29,794 1830.51,816 1830.73,820 1830.95,766 1831.17,818 1831.39,798 1831.61,799 1831.83,795 1832.05,775 1832.27,812 1832.49,820 1832.71,813 1832.93,820 1833.15,771 1833.37,818 1833.59,774 1833.81,813 1834.03,799 1834.25,785 1834.47,786 1834.69,815 1834.91,819 1835.13,794 1835.35,787 1835.57,777 1835.79,800 1836.01,793 1836.23,772 1836.45,773 1836.67,776 1836.89,757 1837.11,779 1837.33,779 1837.55,782 1837.77,770 1837.99,746 1838.21,789 1838.43,782 1838.65,786 1838.87,796 1839.09,812 1839.31,797 1839.53,803 1839.75,792 1839.97,803 1840.19,797 1840.41,780 1840.63,797 1840.85,797 1841.07,789 1841.29,820 1841.51,820 1841.73,787 1841.95,807 1842.17,795 1842.39,815 1842.61,811 1842.83,777 1843.05,793 1843.27,808 1843.49,795 1843.71,793 1843.93,801 1844.15,788 1844.37,788 1844.59,808 1844.81,798 1845.03,785 1845.25,790 1845.47,798 1845.69,789 1845.91,808 1846.13,787 1846.35,808 1846.57,797" fill="none" stroke="#f8f8f8" stroke-width="0.95" stroke-linejoin="round"/><path d="M1530.9 731.8 Q1533.3 707.0 1533.9 639.8 L1535.1 639.8 Q1535.6 703.5 1537.8 731.8 Z" fill="#f8f8f8"/><path d="M1432.6 465V821.2" stroke="#a8302a" stroke-width="2.4"/><path d="M1534.50 466.5V820.25" stroke="#e6e650" stroke-width="1" stroke-dasharray="1 1"/><path d="M1534.80 533.5V684" stroke="#f2f266" stroke-width="1.4"/><circle cx="1534.90" cy="570.5" r="6.1" fill="#ffff14"/></svg>
<span class="t" style="left:1376px;top:456px;font-size:20.93px;color:#fff;transform:translateX(0.58px) scaleX(0.9773);">-10.0</span>
<span class="t" style="left:1376px;top:527px;font-size:20.93px;color:#fff;transform:translateX(0.58px) scaleX(0.9773);">-20.0</span>
<span class="t" style="left:1376px;top:598px;font-size:20.93px;color:#fff;transform:translateX(0.58px) scaleX(0.9773);">-30.0</span>
<span class="t" style="left:1376px;top:669px;font-size:20.93px;color:#fff;transform:translateX(0.58px) scaleX(0.9773);">-40.0</span>
<span class="t" style="left:1376px;top:740px;font-size:20.93px;color:#fff;transform:translateX(0.58px) scaleX(0.9773);">-50.0</span>
<span class="t" style="left:1376px;top:810px;font-size:20.93px;color:#fff;transform:translateX(0.58px) scaleX(0.9773);">-60.0</span>
<span class="t" style="left:1440px;top:829px;font-size:15.41px;color:#fff;transform:translateX(0.14px) scaleX(0.9606);">-60</span>
<span class="t" style="left:1467px;top:849px;font-size:15.41px;color:#fff;transform:translateX(0.91px) scaleX(0.9606);">-40</span>
<span class="t" style="left:1495px;top:829px;font-size:15.41px;color:#fff;transform:translateX(0.68px) scaleX(0.9606);">-20</span>
<span class="t" style="left:1530px;top:849px;font-size:15.41px;color:#fff;transform:translateX(0.39px) scaleX(0.9606);">0</span>
<span class="t" style="left:1553px;top:829px;font-size:15.41px;color:#fff;transform:translateX(0.96px) scaleX(0.9606);">20</span>
<span class="t" style="left:1581px;top:849px;font-size:15.41px;color:#fff;transform:translateX(0.94px) scaleX(0.9606);">40</span>
<span class="t" style="left:1609px;top:829px;font-size:15.41px;color:#fff;transform:translateX(0.50px) scaleX(0.9606);">60</span>
<span class="t" style="left:1637px;top:849px;font-size:15.41px;color:#fff;transform:translateX(0.33px) scaleX(0.9606);">80</span>
<span class="t" style="left:1660px;top:829px;font-size:15.41px;color:#fff;transform:translateX(0.73px) scaleX(0.9606);">100</span>
<span class="t" style="left:1688px;top:849px;font-size:15.41px;color:#fff;transform:translateX(0.50px) scaleX(0.9606);">120</span>
<span class="t" style="left:1716px;top:829px;font-size:15.41px;color:#fff;transform:translateX(0.27px) scaleX(0.9606);">140</span>
<span class="t" style="left:1744px;top:849px;font-size:15.41px;color:#fff;transform:translateX(0.04px) scaleX(0.9606);">160</span>
<span class="t" style="left:1771px;top:829px;font-size:15.41px;color:#fff;transform:translateX(0.81px) scaleX(0.9606);">180</span>
<span class="t" style="left:1799px;top:849px;font-size:15.41px;color:#fff;transform:translateX(0.77px) scaleX(0.9606);">200</span>
<span class="t" style="left:1827px;top:829px;font-size:15.41px;color:#fff;transform:translateX(0.54px) scaleX(0.9606);">220</span>
<span class="t" style="left:1527px;top:872px;font-size:21.22px;color:#fff;transform:translateX(0.94px) scaleX(0.9475);">Distance Difference (km)</span>
<span class="t" style="left:1336.40px;top:712.66px;font-size:21.22px;color:#fff;transform:rotate(-90deg) scaleX(0.9467);">Magnitude (dB)</span>
</div></body></html>
